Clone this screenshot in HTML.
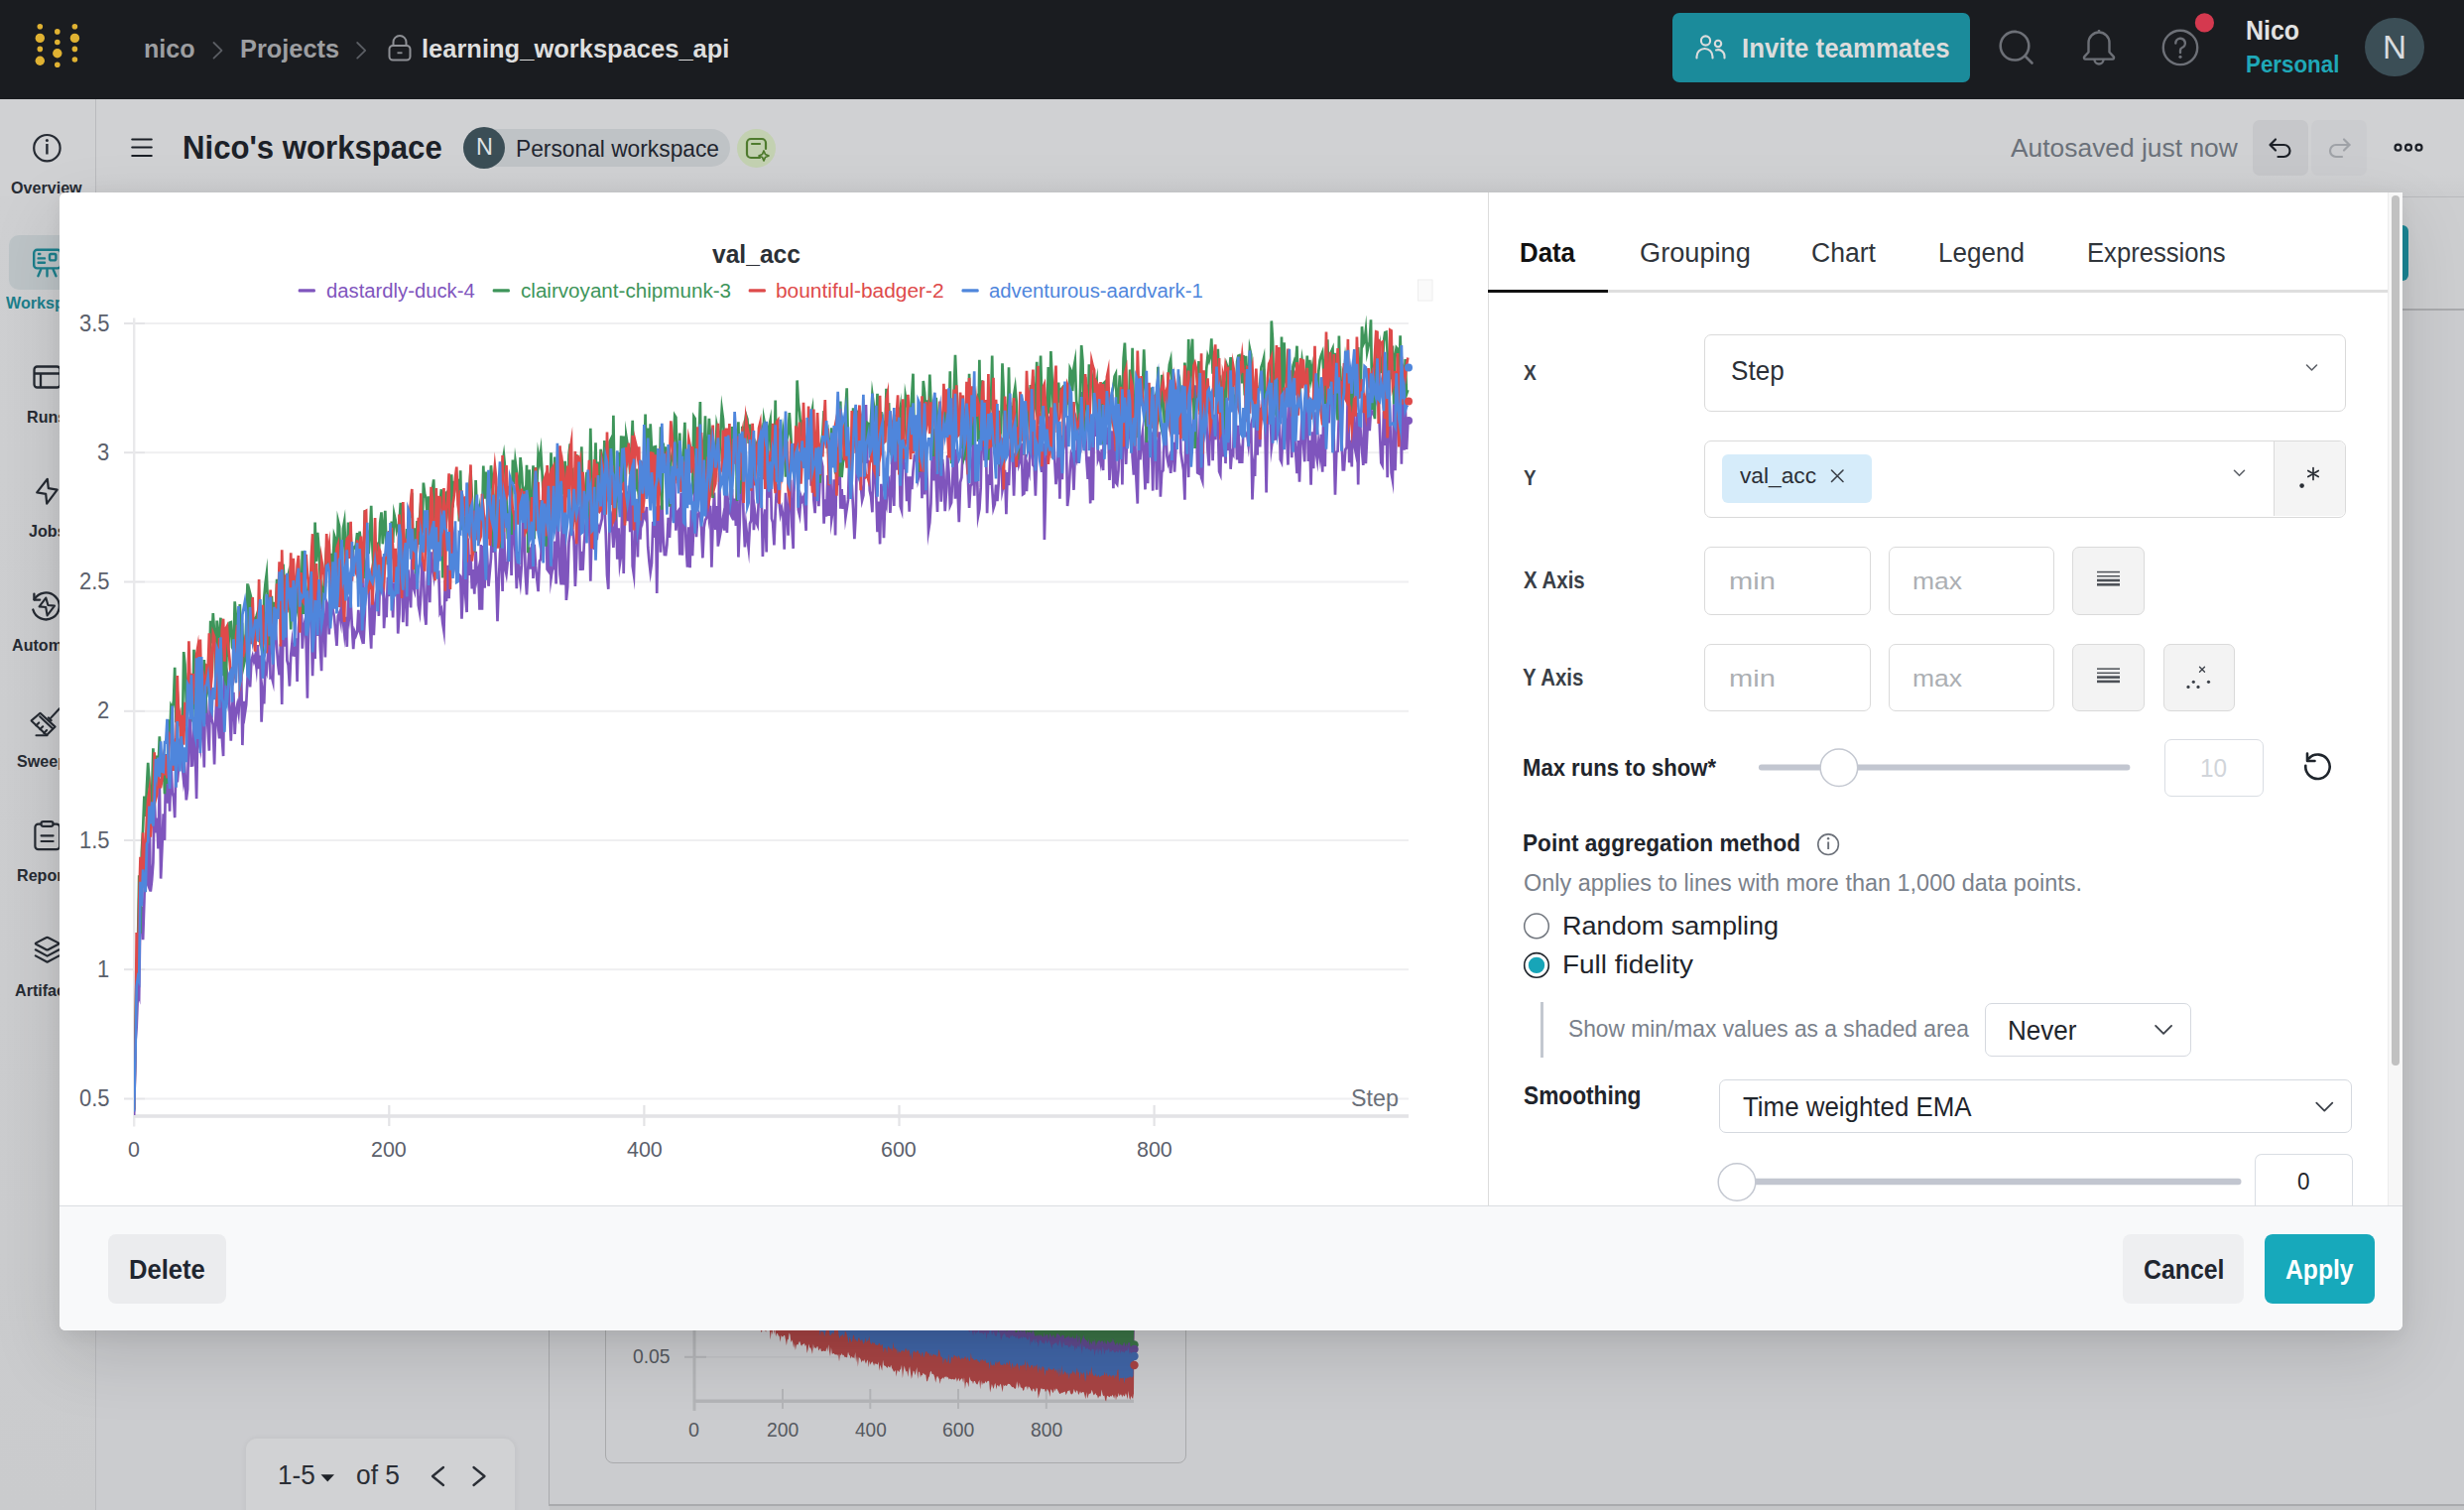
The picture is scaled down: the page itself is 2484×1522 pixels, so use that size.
<!DOCTYPE html>
<html><head><meta charset="utf-8"><title>W&amp;B workspace</title>
<style>
html,body{margin:0;padding:0;}
body{width:2484px;height:1522px;overflow:hidden;position:relative;background:#cecfd1;font-family:"Liberation Sans",sans-serif;}
.t{position:absolute;white-space:nowrap;transform-origin:0 0;font-family:"Liberation Sans",sans-serif;}
.r{position:absolute;}
.s{position:absolute;overflow:visible;}
</style></head><body>
<div class="r" style="left:0px;top:100px;width:2484px;height:1422px;background:#cbcccf;border-radius:0px;"></div>
<div class="r" style="left:0px;top:100px;width:2484px;height:98px;background:#d0d1d3;border-radius:0px;"></div>
<div class="r" style="left:96px;top:198px;width:2388px;height:114px;background:#cdced0;border-radius:0px;"></div>
<div class="r" style="left:0px;top:198px;width:96px;height:1324px;background:linear-gradient(#cfd0d2,#cacbcd);border-radius:0px;"></div>
<div class="r" style="left:96px;top:176px;width:2388px;height:22px;background:linear-gradient(#d0d1d3,#cbccce);border-radius:0px;"></div>
<div class="r" style="left:96px;top:100px;width:1px;height:1422px;background:#b9babd;border-radius:0px;"></div>
<div class="r" style="left:9px;top:237px;width:83px;height:55px;background:#bdc4c7;border-radius:10px;"></div>
<svg class="s" style="left:0px;top:100px;" width="100" height="1000" viewBox="0 100 100 1000"><circle cx="47.4" cy="149.2" r="13.2" fill="none" stroke="#262b33" stroke-width="2.2"/><rect x="46.2" y="145" width="2.4" height="10.5" fill="#262b33"/><circle cx="47.4" cy="141.5" r="1.5" fill="#262b33"/><g fill="none" stroke="#1c7f8c" stroke-width="2.4" stroke-linecap="round" stroke-linejoin="round"><rect x="34.2" y="251.8" width="27" height="18.6" rx="3.2"/><path d="M39 256h1.3M38.6 260.4h6.4M38.6 264.7h6.4"/><rect x="50" y="256" width="6.4" height="6.4" rx="1.6"/><path d="M41.2 271.6l-2.8 6.6M47.5 271.6v6.6M53.6 271.6l2.9 6.6"/></g><g fill="none" stroke="#262b33" stroke-width="2.3" stroke-linejoin="round"><rect x="34.5" y="369.5" width="26" height="21" rx="3"/><path d="M34.5 376.5h26M41 376.5v14"/></g><path d="M47.8 482.8 L37.2 496.4 L46.2 497.9 L47.2 507.6 L57.7 493.6 L48.8 492.2 Z" fill="none" stroke="#262b33" stroke-width="2.2" stroke-linejoin="round"/><g fill="none" stroke="#262b33" stroke-width="2.3" stroke-linecap="round" stroke-linejoin="round"><path d="M34.6 604.2 A13.5 13.5 0 1 1 33.3 614.5"/><path d="M34.4 598.6 V604.6 H40.2"/><path d="M46.3 602.6 L39.6 611.4 L46.2 612 L47.6 620.4 L55 610.6 L48.4 610 Z" stroke-width="2.1"/></g><g fill="none" stroke="#262b33" stroke-width="2.1" stroke-linecap="round" stroke-linejoin="round"><path d="M40.5 718.8 L31.6 726.4 L47 741 L55.6 732.6 Z"/><path d="M40.2 722.2 L53.2 734.6"/><path d="M51.2 723.6 L60 714.2"/><path d="M36.5 741.2 H47.5"/><path d="M36.4 731.2 L39.2 728.4M40.4 735.1 L43.2 732.3M44.3 738.9 L47.1 736.1"/><path d="M48.9 723.5 L51.5 726.1" stroke-width="2.4"/></g><g fill="none" stroke="#262b33" stroke-width="2.2" stroke-linejoin="round" stroke-linecap="round"><path d="M41.2 830.6 H38.6 a3.2 3.2 0 0 0 -3.2 3.2 V853 a3.2 3.2 0 0 0 3.2 3.2 H57 a3.2 3.2 0 0 0 3.2 -3.2 V833.8 a3.2 3.2 0 0 0 -3.2 -3.2 H53.8"/><rect x="41.4" y="828.2" width="12.2" height="4.6" rx="2.3"/><path d="M41.6 842.3h12M41.6 848h12"/></g><g fill="none" stroke="#262b33" stroke-width="2.2" stroke-linejoin="round" stroke-linecap="round"><path d="M46.3 945.2 Q47.6 944.4 48.9 945.2 L58.8 950.4 Q60 951.1 58.8 951.8 L48.9 957 Q47.6 957.8 46.3 957 L36.4 951.8 Q35.2 951.1 36.4 950.4 Z"/><path d="M35.8 957.3 L47.6 963.6 L59.6 957.3"/><path d="M35.8 963.4 L47.6 969.7 L59.6 963.4"/></g></svg>
<div class="t" style="left:11.06px;top:180.96px;font-size:16.28px;line-height:16.28px;color:#272c34;font-weight:bold;transform:scaleX(0.9904);">Overview</div>
<div class="t" style="left:5.60px;top:296.76px;font-size:16.28px;line-height:16.28px;color:#1c7f8c;font-weight:bold;transform:scaleX(0.9904);">Workspaces</div>
<div class="t" style="left:26.90px;top:411.96px;font-size:16.28px;line-height:16.28px;color:#272c34;font-weight:bold;transform:scaleX(0.9904);">Runs</div>
<div class="t" style="left:28.63px;top:526.76px;font-size:16.28px;line-height:16.28px;color:#272c34;font-weight:bold;transform:scaleX(0.9904);">Jobs</div>
<div class="t" style="left:12.10px;top:641.76px;font-size:16.28px;line-height:16.28px;color:#272c34;font-weight:bold;transform:scaleX(0.9904);">Automations</div>
<div class="t" style="left:17.30px;top:759.16px;font-size:16.28px;line-height:16.28px;color:#272c34;font-weight:bold;transform:scaleX(0.9904);">Sweeps</div>
<div class="t" style="left:16.62px;top:874.46px;font-size:16.28px;line-height:16.28px;color:#272c34;font-weight:bold;transform:scaleX(0.9904);">Reports</div>
<div class="t" style="left:14.68px;top:989.76px;font-size:16.28px;line-height:16.28px;color:#272c34;font-weight:bold;transform:scaleX(0.9904);">Artifacts</div>
<svg class="s" style="left:120px;top:120px;" width="50" height="50" viewBox="120 120 50 50"><g stroke="#1b2027" stroke-width="2.0" stroke-linecap="round"><path d="M133.2 140.5h19.6M133.2 148.6h19.6M133.2 157h19.6"/></g></svg>
<div class="t" style="left:184.38px;top:132.18px;font-size:33.43px;line-height:33.43px;color:#1c2128;font-weight:bold;transform:scaleX(0.9314);">Nico's workspace</div>
<div class="r" style="left:467px;top:130px;width:269px;height:38px;background:#bfc3c6;border-radius:19px;"></div>
<div class="r" style="left:467px;top:127.8px;width:42px;height:42px;border-radius:50%;background:#3b4e56"></div>
<div class="t" style="left:479.53px;top:137.16px;font-size:23.69px;line-height:23.69px;color:#dfe2e4;transform:scaleX(0.9874);">N</div>
<div class="t" style="left:519.58px;top:138.49px;font-size:24.13px;line-height:24.13px;color:#1f2630;transform:scaleX(0.9437);">Personal workspace</div>
<div class="r" style="left:743px;top:129.5px;width:39px;height:39px;border-radius:50%;background:#c3d1b1"></div>
<svg class="s" style="left:740px;top:125px;" width="50" height="50" viewBox="740 125 50 50"><g fill="none" stroke="#4f7b2e" stroke-width="2.2" stroke-linejoin="round" stroke-linecap="round"><path d="M766 159h-9a4 4 0 0 1 -4 -4v-11a4 4 0 0 1 4 -4h11a4 4 0 0 1 4 4v6"/><path d="M758 145h8"/><path d="M770 152 l1.5 3.5 3.5 1.5 -3.5 1.5 -1.5 3.5 -1.5 -3.5 -3.5 -1.5 3.5 -1.5z" stroke-width="1.8"/></g></svg>
<div class="t" style="left:2026.50px;top:136.09px;font-size:26.60px;line-height:26.60px;color:#6b717a;transform:scaleX(0.9920);">Autosaved just now</div>
<div class="r" style="left:2271px;top:121px;width:56px;height:56px;background:#c6c7ca;border-radius:7px;"></div>
<div class="r" style="left:2330px;top:121px;width:56px;height:56px;background:#cbcccf;border-radius:7px;"></div>
<svg class="s" style="left:2270px;top:120px;" width="200" height="60" viewBox="2270 120 200 60"><g fill="none" stroke="#1c2027" stroke-width="2.2" stroke-linecap="round" stroke-linejoin="round"><path d="M2294 140.5 l-5.5 5.5 5.5 5.5"/><path d="M2289 146h13.5a6 6 0 0 1 0 12h-6"/></g><g fill="none" stroke="#9fa2a7" stroke-width="2.2" stroke-linecap="round" stroke-linejoin="round"><path d="M2363 140.5 l5.5 5.5 -5.5 5.5"/><path d="M2368.5 146h-13.5a6 6 0 0 0 0 12h6"/></g><g fill="none" stroke="#1c2027" stroke-width="2.2"><circle cx="2417.5" cy="148.7" r="3"/><circle cx="2428" cy="148.7" r="3"/><circle cx="2438.5" cy="148.7" r="3"/></g></svg>
<div class="r" style="left:2422px;top:198px;width:62px;height:1px;background:#b9babd;border-radius:0px;"></div>
<div class="r" style="left:2422px;top:227px;width:6px;height:56px;background:#1b8796;border-radius:0px;border-radius:0 6px 6px 0;"></div>
<div class="r" style="left:2422px;top:311px;width:62px;height:2px;background:#a9aaad;border-radius:0px;"></div>
<div class="r" style="left:553px;top:1341px;width:1px;height:176px;background:#a9aaad;border-radius:0px;"></div>
<div class="r" style="left:553px;top:1516px;width:1931px;height:2px;background:#a9aaad;border-radius:0px;"></div>
<div class="r" style="left:554px;top:1518px;width:1930px;height:4px;background:#c4c5c7;border-radius:0px;"></div>
<div class="r" style="left:610px;top:1300px;width:586px;height:175px;background:transparent;border:1.5px solid #a9aaac;box-sizing:border-box;border-radius:8px;"></div>
<svg class="s" style="left:600px;top:1336px;" width="600" height="186" viewBox="600 1336 600 186"><rect x="698.5" y="1341" width="3" height="81" fill="#b4b5b8"/><rect x="700" y="1410.5" width="443" height="3.5" fill="#b4b5b8"/><rect x="690" y="1367.3" width="453" height="1.2" fill="#bfc0c3"/><rect x="690" y="1366.8" width="22" height="2" fill="#b4b5b8"/><rect x="788" y="1400" width="2" height="20" fill="#b4b5b8"/><rect x="876.3" y="1400" width="2" height="20" fill="#b4b5b8"/><rect x="965" y="1400" width="2" height="20" fill="#b4b5b8"/><rect x="1053.8" y="1400" width="2" height="20" fill="#b4b5b8"/><polygon points="765.0,1339.2 765.9,1340.6 766.8,1340.8 767.7,1343.3 768.6,1340.2 769.5,1337.9 770.4,1338.9 771.3,1340.9 772.2,1342.8 773.1,1334.8 774.0,1339.9 774.9,1340.2 775.8,1340.5 776.7,1350.5 777.6,1341.5 778.5,1345.3 779.4,1337.0 780.3,1345.0 781.2,1337.9 782.1,1347.2 783.0,1344.2 783.9,1343.9 784.8,1346.5 785.7,1346.8 786.6,1352.7 787.5,1346.0 788.4,1347.3 789.3,1347.6 790.2,1345.9 791.1,1346.1 792.0,1350.5 792.9,1356.2 793.8,1349.9 794.7,1350.3 795.6,1343.6 796.5,1345.3 797.4,1353.2 798.3,1350.6 799.2,1353.1 800.1,1358.8 801.0,1354.1 801.9,1361.0 802.8,1355.9 803.7,1355.1 804.6,1355.4 805.5,1352.6 806.4,1352.2 807.3,1355.4 808.2,1356.8 809.1,1355.0 810.0,1355.0 810.9,1353.7 811.8,1356.9 812.7,1355.2 813.6,1364.1 814.5,1360.5 815.4,1354.5 816.3,1358.8 817.2,1358.3 818.1,1361.0 819.0,1364.9 819.9,1354.4 820.8,1359.6 821.7,1357.8 822.6,1359.5 823.5,1357.5 824.4,1357.1 825.3,1361.5 826.2,1360.0 827.1,1358.8 828.0,1362.3 828.9,1361.9 829.8,1361.8 830.7,1361.6 831.6,1362.1 832.5,1362.1 833.4,1358.0 834.3,1362.6 835.2,1355.2 836.1,1362.5 837.0,1367.3 837.9,1357.9 838.8,1364.4 839.7,1364.6 840.6,1364.1 841.5,1365.3 842.4,1365.6 843.3,1365.1 844.2,1366.7 845.1,1364.8 846.0,1372.4 846.9,1365.0 847.8,1366.5 848.7,1364.0 849.6,1366.3 850.5,1365.7 851.4,1367.8 852.3,1367.7 853.2,1368.3 854.1,1367.9 855.0,1362.6 855.9,1365.4 856.8,1366.5 857.7,1369.4 858.6,1366.8 859.5,1368.4 860.4,1368.3 861.3,1369.6 862.2,1363.1 863.1,1373.3 864.0,1367.0 864.9,1377.7 865.8,1368.1 866.7,1368.7 867.6,1370.1 868.5,1373.5 869.4,1371.0 870.3,1372.4 871.2,1370.1 872.1,1372.5 873.0,1374.8 873.9,1371.9 874.8,1370.4 875.7,1378.3 876.6,1371.7 877.5,1375.7 878.4,1373.6 879.3,1372.2 880.2,1373.9 881.1,1376.8 882.0,1373.8 882.9,1375.2 883.8,1374.6 884.7,1375.7 885.6,1372.6 886.5,1381.8 887.4,1375.4 888.3,1378.4 889.2,1381.8 890.1,1370.7 891.0,1376.2 891.9,1376.6 892.8,1376.9 893.7,1378.1 894.6,1379.0 895.5,1376.8 896.4,1378.0 897.3,1378.4 898.2,1375.8 899.1,1379.1 900.0,1380.5 900.9,1382.4 901.8,1382.4 902.7,1380.7 903.6,1387.7 904.5,1381.2 905.4,1381.6 906.3,1383.2 907.2,1380.8 908.1,1379.9 909.0,1375.8 909.9,1389.3 910.8,1381.6 911.7,1376.6 912.6,1380.5 913.5,1382.7 914.4,1381.7 915.3,1388.0 916.2,1380.8 917.1,1377.3 918.0,1384.1 918.9,1389.9 919.8,1386.1 920.7,1381.5 921.6,1382.5 922.5,1386.3 923.4,1382.4 924.3,1377.9 925.2,1390.0 926.1,1383.0 927.0,1382.6 927.9,1388.4 928.8,1385.7 929.7,1386.6 930.6,1383.7 931.5,1384.7 932.4,1385.8 933.3,1385.4 934.2,1392.4 935.1,1392.0 936.0,1388.5 936.9,1387.2 937.8,1382.9 938.7,1381.7 939.6,1385.3 940.5,1384.7 941.4,1385.8 942.3,1388.4 943.2,1393.8 944.1,1389.1 945.0,1386.8 945.9,1388.2 946.8,1389.9 947.7,1395.1 948.6,1390.1 949.5,1389.8 950.4,1388.2 951.3,1390.0 952.2,1387.5 953.1,1388.6 954.0,1387.1 954.9,1388.8 955.8,1387.9 956.7,1390.5 957.6,1389.6 958.5,1390.1 959.4,1390.5 960.3,1389.7 961.2,1390.6 962.1,1390.2 963.0,1390.5 963.9,1388.2 964.8,1392.7 965.7,1390.5 966.6,1389.0 967.5,1392.5 968.4,1390.6 969.3,1389.6 970.2,1389.5 971.1,1394.1 972.0,1388.3 972.9,1400.1 973.8,1394.0 974.7,1392.8 975.6,1394.3 976.5,1398.2 977.4,1387.6 978.3,1390.7 979.2,1392.3 980.1,1392.1 981.0,1395.1 981.9,1391.9 982.8,1391.9 983.7,1394.1 984.6,1395.3 985.5,1395.5 986.4,1393.0 987.3,1391.0 988.2,1400.6 989.1,1391.4 990.0,1396.2 990.9,1393.2 991.8,1394.7 992.7,1394.1 993.6,1392.0 994.5,1394.0 995.4,1392.2 996.3,1391.7 997.2,1392.4 998.1,1403.5 999.0,1399.5 999.9,1395.1 1000.8,1397.9 1001.7,1400.1 1002.6,1395.8 1003.5,1394.0 1004.4,1400.4 1005.3,1396.0 1006.2,1396.4 1007.1,1397.9 1008.0,1395.7 1008.9,1394.7 1009.8,1399.0 1010.7,1403.2 1011.6,1395.5 1012.5,1397.2 1013.4,1396.0 1014.3,1397.1 1015.2,1396.4 1016.1,1394.7 1017.0,1395.0 1017.9,1395.1 1018.8,1396.3 1019.7,1397.6 1020.6,1398.2 1021.5,1398.0 1022.4,1399.3 1023.3,1400.1 1024.2,1398.9 1025.1,1392.3 1026.0,1396.3 1026.9,1399.8 1027.8,1393.6 1028.7,1398.0 1029.6,1398.8 1030.5,1399.1 1031.4,1402.0 1032.3,1401.1 1033.2,1397.6 1034.1,1398.4 1035.0,1396.8 1035.9,1400.9 1036.8,1397.4 1037.7,1397.9 1038.6,1399.4 1039.5,1401.2 1040.4,1402.7 1041.3,1399.8 1042.2,1399.8 1043.1,1402.4 1044.0,1402.6 1044.9,1398.4 1045.8,1400.1 1046.7,1409.4 1047.6,1405.9 1048.5,1402.7 1049.4,1399.5 1050.3,1399.6 1051.2,1400.4 1052.1,1399.9 1053.0,1400.0 1053.9,1403.0 1054.8,1402.0 1055.7,1399.7 1056.6,1401.5 1057.5,1403.1 1058.4,1408.1 1059.3,1400.2 1060.2,1400.9 1061.1,1403.7 1062.0,1403.5 1062.9,1399.6 1063.8,1402.5 1064.7,1399.5 1065.6,1399.9 1066.5,1401.7 1067.4,1403.4 1068.3,1404.9 1069.2,1404.7 1070.1,1403.5 1071.0,1404.2 1071.9,1403.2 1072.8,1402.9 1073.7,1402.4 1074.6,1406.2 1075.5,1404.3 1076.4,1402.1 1077.3,1402.1 1078.2,1401.1 1079.1,1404.2 1080.0,1405.4 1080.9,1405.2 1081.8,1404.1 1082.7,1400.0 1083.6,1402.4 1084.5,1404.0 1085.4,1401.3 1086.3,1402.3 1087.2,1406.0 1088.1,1404.6 1089.0,1402.2 1089.9,1404.5 1090.8,1403.6 1091.7,1402.9 1092.6,1403.2 1093.5,1406.5 1094.4,1410.2 1095.3,1403.2 1096.2,1409.8 1097.1,1406.7 1098.0,1404.4 1098.9,1405.1 1099.8,1404.0 1100.7,1400.8 1101.6,1403.5 1102.5,1406.2 1103.4,1405.7 1104.3,1403.9 1105.2,1406.0 1106.1,1406.4 1107.0,1409.7 1107.9,1407.6 1108.8,1407.2 1109.7,1407.6 1110.6,1400.6 1111.5,1405.4 1112.4,1407.3 1113.3,1406.4 1114.2,1411.2 1115.1,1412.5 1116.0,1407.3 1116.9,1406.8 1117.8,1408.1 1118.7,1408.2 1119.6,1406.8 1120.5,1407.8 1121.4,1405.8 1122.3,1407.2 1123.2,1409.7 1124.1,1405.5 1125.0,1411.5 1125.9,1407.1 1126.8,1408.5 1127.7,1404.1 1128.6,1407.4 1129.5,1405.5 1130.4,1405.7 1131.3,1408.5 1132.2,1405.4 1133.1,1407.5 1134.0,1406.9 1134.9,1404.2 1135.8,1406.7 1136.7,1410.5 1137.6,1402.1 1138.5,1409.2 1139.4,1411.1 1140.3,1407.1 1141.2,1409.1 1142.1,1410.1 1143.0,1404.5 1143.5,1330 765,1330" fill="#a84444"/><polygon points="815.0,1335.3 815.9,1338.5 816.8,1335.9 817.7,1334.5 818.6,1329.2 819.5,1337.1 820.4,1340.0 821.3,1338.7 822.2,1335.8 823.1,1339.7 824.0,1339.0 824.9,1339.5 825.8,1336.7 826.7,1346.2 827.6,1341.4 828.5,1341.9 829.4,1342.6 830.3,1342.3 831.2,1347.6 832.1,1343.2 833.0,1339.7 833.9,1340.2 834.8,1340.5 835.7,1340.0 836.6,1346.2 837.5,1345.8 838.4,1344.5 839.3,1342.7 840.2,1345.4 841.1,1341.6 842.0,1336.3 842.9,1341.5 843.8,1340.7 844.7,1338.4 845.6,1346.0 846.5,1349.6 847.4,1346.2 848.3,1346.4 849.2,1345.0 850.1,1345.8 851.0,1348.5 851.9,1341.9 852.8,1342.3 853.7,1345.1 854.6,1348.2 855.5,1354.4 856.4,1347.7 857.3,1349.4 858.2,1352.7 859.1,1351.9 860.0,1346.3 860.9,1345.4 861.8,1351.3 862.7,1349.6 863.6,1351.9 864.5,1352.4 865.4,1348.6 866.3,1348.4 867.2,1351.9 868.1,1350.4 869.0,1350.2 869.9,1353.1 870.8,1354.9 871.7,1352.3 872.6,1348.6 873.5,1353.3 874.4,1351.0 875.3,1351.8 876.2,1347.0 877.1,1352.3 878.0,1354.4 878.9,1354.7 879.8,1352.2 880.7,1354.2 881.6,1353.2 882.5,1355.5 883.4,1355.6 884.3,1356.0 885.2,1355.8 886.1,1353.8 887.0,1354.4 887.9,1357.1 888.8,1355.4 889.7,1355.1 890.6,1363.5 891.5,1358.2 892.4,1358.6 893.3,1359.2 894.2,1364.2 895.1,1356.7 896.0,1357.7 896.9,1359.1 897.8,1359.5 898.7,1359.5 899.6,1361.8 900.5,1352.5 901.4,1359.5 902.3,1358.2 903.2,1361.0 904.1,1358.9 905.0,1365.1 905.9,1360.5 906.8,1362.9 907.7,1363.4 908.6,1361.3 909.5,1361.5 910.4,1361.0 911.3,1363.1 912.2,1360.7 913.1,1358.8 914.0,1360.6 914.9,1362.6 915.8,1360.1 916.7,1361.4 917.6,1368.0 918.5,1362.8 919.4,1371.3 920.3,1363.3 921.2,1361.6 922.1,1362.0 923.0,1363.6 923.9,1362.7 924.8,1361.0 925.7,1361.7 926.6,1364.9 927.5,1363.6 928.4,1367.4 929.3,1363.6 930.2,1362.9 931.1,1368.6 932.0,1366.4 932.9,1362.3 933.8,1362.5 934.7,1362.4 935.6,1364.8 936.5,1363.6 937.4,1367.2 938.3,1363.5 939.2,1367.2 940.1,1365.9 941.0,1364.5 941.9,1365.6 942.8,1366.0 943.7,1365.5 944.6,1367.9 945.5,1365.9 946.4,1360.1 947.3,1362.4 948.2,1366.8 949.1,1368.2 950.0,1367.6 950.9,1375.6 951.8,1368.2 952.7,1370.9 953.6,1368.8 954.5,1373.4 955.4,1372.4 956.3,1364.5 957.2,1373.9 958.1,1374.4 959.0,1368.1 959.9,1367.7 960.8,1370.0 961.7,1365.4 962.6,1366.3 963.5,1367.8 964.4,1366.5 965.3,1369.8 966.2,1366.1 967.1,1367.8 968.0,1369.6 968.9,1370.6 969.8,1368.3 970.7,1369.2 971.6,1369.9 972.5,1367.7 973.4,1367.0 974.3,1371.0 975.2,1367.5 976.1,1369.8 977.0,1371.8 977.9,1371.9 978.8,1363.6 979.7,1369.8 980.6,1369.1 981.5,1370.5 982.4,1371.1 983.3,1370.8 984.2,1370.0 985.1,1370.4 986.0,1372.5 986.9,1372.2 987.8,1373.8 988.7,1369.8 989.6,1371.8 990.5,1369.8 991.4,1371.6 992.3,1371.9 993.2,1369.7 994.1,1373.6 995.0,1374.0 995.9,1373.5 996.8,1373.2 997.7,1380.7 998.6,1371.3 999.5,1376.0 1000.4,1376.4 1001.3,1375.1 1002.2,1377.1 1003.1,1374.5 1004.0,1371.8 1004.9,1375.6 1005.8,1372.3 1006.7,1373.6 1007.6,1371.5 1008.5,1375.4 1009.4,1375.9 1010.3,1375.5 1011.2,1376.4 1012.1,1374.0 1013.0,1375.4 1013.9,1375.7 1014.8,1373.2 1015.7,1373.6 1016.6,1376.3 1017.5,1370.8 1018.4,1374.5 1019.3,1380.8 1020.2,1373.6 1021.1,1375.5 1022.0,1379.5 1022.9,1375.8 1023.8,1378.1 1024.7,1375.1 1025.6,1374.0 1026.5,1376.2 1027.4,1381.7 1028.3,1376.3 1029.2,1376.3 1030.1,1377.2 1031.0,1375.1 1031.9,1376.5 1032.8,1375.6 1033.7,1370.5 1034.6,1382.0 1035.5,1371.9 1036.4,1375.3 1037.3,1377.0 1038.2,1379.4 1039.1,1376.7 1040.0,1375.9 1040.9,1375.8 1041.8,1380.1 1042.7,1375.8 1043.6,1378.1 1044.5,1376.6 1045.4,1374.9 1046.3,1384.6 1047.2,1376.3 1048.1,1381.5 1049.0,1377.8 1049.9,1382.1 1050.8,1377.0 1051.7,1377.7 1052.6,1379.1 1053.5,1387.2 1054.4,1380.5 1055.3,1381.5 1056.2,1381.8 1057.1,1377.7 1058.0,1380.0 1058.9,1380.1 1059.8,1380.5 1060.7,1381.1 1061.6,1379.9 1062.5,1378.7 1063.4,1382.5 1064.3,1380.0 1065.2,1381.3 1066.1,1384.9 1067.0,1378.7 1067.9,1387.9 1068.8,1379.1 1069.7,1387.0 1070.6,1376.2 1071.5,1385.7 1072.4,1384.7 1073.3,1381.8 1074.2,1383.6 1075.1,1383.7 1076.0,1386.4 1076.9,1382.9 1077.8,1390.3 1078.7,1383.9 1079.6,1384.8 1080.5,1384.4 1081.4,1380.9 1082.3,1384.0 1083.2,1381.9 1084.1,1386.8 1085.0,1382.7 1085.9,1378.4 1086.8,1384.0 1087.7,1382.5 1088.6,1391.0 1089.5,1382.5 1090.4,1384.3 1091.3,1386.0 1092.2,1383.1 1093.1,1384.7 1094.0,1392.7 1094.9,1388.9 1095.8,1380.3 1096.7,1386.6 1097.6,1386.2 1098.5,1381.2 1099.4,1386.0 1100.3,1377.2 1101.2,1383.8 1102.1,1386.2 1103.0,1386.5 1103.9,1387.0 1104.8,1384.2 1105.7,1388.0 1106.6,1387.2 1107.5,1385.6 1108.4,1388.5 1109.3,1387.6 1110.2,1387.1 1111.1,1386.3 1112.0,1386.5 1112.9,1385.9 1113.8,1382.6 1114.7,1387.1 1115.6,1383.5 1116.5,1386.5 1117.4,1387.8 1118.3,1385.8 1119.2,1385.9 1120.1,1388.6 1121.0,1385.9 1121.9,1387.1 1122.8,1385.7 1123.7,1389.9 1124.6,1385.6 1125.5,1387.8 1126.4,1381.6 1127.3,1380.1 1128.2,1392.9 1129.1,1388.8 1130.0,1389.6 1130.9,1388.8 1131.8,1389.6 1132.7,1388.2 1133.6,1394.8 1134.5,1388.0 1135.4,1389.9 1136.3,1388.6 1137.2,1389.2 1138.1,1387.4 1139.0,1389.1 1139.9,1386.8 1140.8,1389.1 1141.7,1388.0 1142.6,1386.5 1143.5,1330 815,1330" fill="#4065a7"/><polygon points="955.0,1336.0 955.9,1339.0 956.8,1340.1 957.7,1335.3 958.6,1338.5 959.5,1335.3 960.4,1336.2 961.3,1337.7 962.2,1335.2 963.1,1336.5 964.0,1339.5 964.9,1338.7 965.8,1341.0 966.7,1336.5 967.6,1339.8 968.5,1340.0 969.4,1339.8 970.3,1340.2 971.2,1340.6 972.1,1340.7 973.0,1336.1 973.9,1337.7 974.8,1338.7 975.7,1340.3 976.6,1341.7 977.5,1342.7 978.4,1341.0 979.3,1339.9 980.2,1343.2 981.1,1346.5 982.0,1341.4 982.9,1343.1 983.8,1344.9 984.7,1342.6 985.6,1343.3 986.5,1339.7 987.4,1344.1 988.3,1343.5 989.2,1343.7 990.1,1343.3 991.0,1344.4 991.9,1345.1 992.8,1342.8 993.7,1343.3 994.6,1349.9 995.5,1343.3 996.4,1344.8 997.3,1342.5 998.2,1338.8 999.1,1339.9 1000.0,1346.0 1000.9,1343.3 1001.8,1342.1 1002.7,1345.3 1003.6,1346.8 1004.5,1346.9 1005.4,1343.6 1006.3,1341.2 1007.2,1343.2 1008.1,1344.1 1009.0,1350.9 1009.9,1348.7 1010.8,1345.9 1011.7,1345.0 1012.6,1343.7 1013.5,1345.8 1014.4,1348.1 1015.3,1347.5 1016.2,1348.1 1017.1,1348.9 1018.0,1348.9 1018.9,1345.3 1019.8,1347.4 1020.7,1345.2 1021.6,1347.6 1022.5,1346.7 1023.4,1347.6 1024.3,1349.3 1025.2,1345.5 1026.1,1349.8 1027.0,1348.9 1027.9,1349.3 1028.8,1348.7 1029.7,1347.0 1030.6,1349.7 1031.5,1346.6 1032.4,1348.4 1033.3,1347.4 1034.2,1348.0 1035.1,1349.5 1036.0,1350.4 1036.9,1350.3 1037.8,1345.8 1038.7,1356.4 1039.6,1351.2 1040.5,1353.5 1041.4,1351.1 1042.3,1349.4 1043.2,1354.6 1044.1,1348.4 1045.0,1353.2 1045.9,1352.8 1046.8,1358.1 1047.7,1351.5 1048.6,1350.8 1049.5,1351.0 1050.4,1353.7 1051.3,1353.3 1052.2,1354.3 1053.1,1354.5 1054.0,1350.3 1054.9,1352.0 1055.8,1354.5 1056.7,1352.4 1057.6,1350.7 1058.5,1353.8 1059.4,1355.7 1060.3,1359.8 1061.2,1355.2 1062.1,1355.2 1063.0,1354.0 1063.9,1353.9 1064.8,1353.1 1065.7,1354.8 1066.6,1356.9 1067.5,1354.4 1068.4,1350.3 1069.3,1353.4 1070.2,1357.4 1071.1,1358.6 1072.0,1351.7 1072.9,1354.7 1073.8,1356.3 1074.7,1355.9 1075.6,1356.0 1076.5,1355.9 1077.4,1358.5 1078.3,1357.0 1079.2,1357.7 1080.1,1354.3 1081.0,1357.1 1081.9,1356.2 1082.8,1357.1 1083.7,1362.1 1084.6,1357.2 1085.5,1359.7 1086.4,1356.4 1087.3,1356.4 1088.2,1358.8 1089.1,1352.9 1090.0,1359.4 1090.9,1364.4 1091.8,1355.0 1092.7,1357.9 1093.6,1357.0 1094.5,1359.9 1095.4,1359.6 1096.3,1358.2 1097.2,1360.3 1098.1,1360.2 1099.0,1360.4 1099.9,1362.4 1100.8,1359.7 1101.7,1359.5 1102.6,1360.6 1103.5,1367.0 1104.4,1361.6 1105.3,1360.9 1106.2,1358.6 1107.1,1365.8 1108.0,1358.9 1108.9,1362.1 1109.8,1360.3 1110.7,1366.3 1111.6,1357.1 1112.5,1360.0 1113.4,1365.4 1114.3,1361.8 1115.2,1360.0 1116.1,1361.2 1117.0,1360.6 1117.9,1358.4 1118.8,1363.8 1119.7,1361.8 1120.6,1362.5 1121.5,1360.8 1122.4,1361.5 1123.3,1363.3 1124.2,1363.2 1125.1,1362.3 1126.0,1361.5 1126.9,1363.7 1127.8,1362.2 1128.7,1360.3 1129.6,1364.5 1130.5,1361.3 1131.4,1363.1 1132.3,1362.1 1133.2,1363.8 1134.1,1362.3 1135.0,1361.3 1135.9,1361.2 1136.8,1361.6 1137.7,1357.8 1138.6,1364.8 1139.5,1362.3 1140.4,1366.1 1141.3,1358.4 1142.2,1364.8 1143.1,1359.6 1143.5,1330 955,1330" fill="#604a8e"/><polygon points="995.0,1337.5 995.9,1333.5 996.8,1337.7 997.7,1338.6 998.6,1335.3 999.5,1339.9 1000.4,1334.8 1001.3,1341.3 1002.2,1337.1 1003.1,1338.3 1004.0,1338.7 1004.9,1338.8 1005.8,1336.6 1006.7,1343.9 1007.6,1336.4 1008.5,1339.5 1009.4,1340.1 1010.3,1337.3 1011.2,1340.4 1012.1,1338.3 1013.0,1341.8 1013.9,1338.3 1014.8,1342.3 1015.7,1341.2 1016.6,1339.6 1017.5,1341.2 1018.4,1336.8 1019.3,1339.2 1020.2,1340.3 1021.1,1339.0 1022.0,1339.7 1022.9,1339.1 1023.8,1343.6 1024.7,1343.0 1025.6,1342.4 1026.5,1339.0 1027.4,1343.2 1028.3,1340.2 1029.2,1342.1 1030.1,1340.6 1031.0,1342.9 1031.9,1340.2 1032.8,1341.3 1033.7,1341.5 1034.6,1345.0 1035.5,1341.5 1036.4,1342.9 1037.3,1343.0 1038.2,1342.1 1039.1,1342.8 1040.0,1344.6 1040.9,1341.3 1041.8,1341.3 1042.7,1344.4 1043.6,1346.9 1044.5,1346.5 1045.4,1345.3 1046.3,1347.0 1047.2,1344.4 1048.1,1346.9 1049.0,1345.3 1049.9,1345.8 1050.8,1347.3 1051.7,1347.7 1052.6,1343.0 1053.5,1347.5 1054.4,1345.8 1055.3,1345.0 1056.2,1345.0 1057.1,1350.3 1058.0,1345.0 1058.9,1344.2 1059.8,1346.9 1060.7,1347.4 1061.6,1345.2 1062.5,1345.9 1063.4,1348.7 1064.3,1348.2 1065.2,1344.7 1066.1,1343.5 1067.0,1345.7 1067.9,1344.9 1068.8,1346.9 1069.7,1347.9 1070.6,1345.4 1071.5,1345.9 1072.4,1345.5 1073.3,1349.6 1074.2,1348.4 1075.1,1348.3 1076.0,1346.5 1076.9,1348.2 1077.8,1345.7 1078.7,1349.2 1079.6,1347.2 1080.5,1348.9 1081.4,1345.9 1082.3,1349.5 1083.2,1348.3 1084.1,1349.4 1085.0,1347.9 1085.9,1343.8 1086.8,1353.5 1087.7,1346.6 1088.6,1348.3 1089.5,1355.5 1090.4,1350.7 1091.3,1349.3 1092.2,1345.4 1093.1,1348.7 1094.0,1349.8 1094.9,1350.9 1095.8,1351.3 1096.7,1353.3 1097.6,1349.0 1098.5,1356.8 1099.4,1351.7 1100.3,1355.2 1101.2,1352.6 1102.1,1350.9 1103.0,1353.5 1103.9,1349.3 1104.8,1357.3 1105.7,1353.8 1106.6,1352.4 1107.5,1351.5 1108.4,1350.6 1109.3,1353.5 1110.2,1351.8 1111.1,1351.8 1112.0,1351.5 1112.9,1354.8 1113.8,1350.8 1114.7,1354.3 1115.6,1354.7 1116.5,1350.7 1117.4,1352.4 1118.3,1353.3 1119.2,1353.9 1120.1,1352.1 1121.0,1352.9 1121.9,1348.7 1122.8,1352.2 1123.7,1353.7 1124.6,1356.3 1125.5,1354.2 1126.4,1353.0 1127.3,1356.5 1128.2,1353.1 1129.1,1354.9 1130.0,1355.3 1130.9,1356.0 1131.8,1356.3 1132.7,1353.7 1133.6,1353.0 1134.5,1357.4 1135.4,1353.8 1136.3,1356.9 1137.2,1353.4 1138.1,1353.5 1139.0,1353.1 1139.9,1356.5 1140.8,1354.7 1141.7,1358.1 1142.6,1354.8 1143.5,1330 995,1330" fill="#3b7547"/><circle cx="1143.5" cy="1355.5" r="4.2" fill="#3b7547"/><circle cx="1143.5" cy="1360" r="4.2" fill="#604a8e"/><circle cx="1143.5" cy="1367" r="4.2" fill="#4065a7"/><circle cx="1143.5" cy="1376" r="4.2" fill="#a84444"/></svg>
<div class="t" style="left:638.23px;top:1358.44px;font-size:19.48px;line-height:19.48px;color:#55595f;transform:scaleX(0.9911);">0.05</div>
<div class="t" style="left:694.46px;top:1432.14px;font-size:19.48px;line-height:19.48px;color:#55595f;transform:scaleX(1.0162);">0</div>
<div class="t" style="left:772.73px;top:1432.14px;font-size:19.48px;line-height:19.48px;color:#55595f;transform:scaleX(0.9944);">200</div>
<div class="t" style="left:861.62px;top:1432.14px;font-size:19.48px;line-height:19.48px;color:#55595f;transform:scaleX(0.9758);">400</div>
<div class="t" style="left:949.73px;top:1432.14px;font-size:19.48px;line-height:19.48px;color:#55595f;transform:scaleX(0.9944);">600</div>
<div class="t" style="left:1038.63px;top:1432.14px;font-size:19.48px;line-height:19.48px;color:#55595f;transform:scaleX(0.9912);">800</div>
<div class="r" style="left:248px;top:1450px;width:271px;height:90px;background:#d1d2d4;border-radius:11px;box-shadow:0 0 6px rgba(0,0,0,0.06);"></div>
<div class="t" style="left:279.84px;top:1472.77px;font-size:27.33px;line-height:27.33px;color:#2a2e35;transform:scaleX(0.9575);">1-5</div>
<svg class="s" style="left:300px;top:1470px;" width="220" height="40" viewBox="300 1470 220 40"><path d="M323.5 1486.3h13.5l-6.75 7.2z" fill="#1e2228"/><g fill="none" stroke="#2a2e35" stroke-width="2.3" stroke-linecap="round" stroke-linejoin="round"><path d="M447 1479 l-11 9 11 9"/><path d="M477.5 1479 l11 9 -11 9"/></g></svg>
<div class="t" style="left:359.25px;top:1472.77px;font-size:27.33px;line-height:27.33px;color:#2a2e35;transform:scaleX(0.9651);">of 5</div>
<div class="r" style="left:0px;top:0px;width:2484px;height:100px;background:#1a1c20;border-radius:0px;"></div>
<svg class="s" style="left:0px;top:0px;" width="800" height="100" viewBox="0 0 800 100"><circle cx="40.3" cy="26.7" r="2.8" fill="#e0b232"/><circle cx="40.3" cy="38.4" r="4.7" fill="#e0b232"/><circle cx="40.3" cy="49.4" r="2.8" fill="#e0b232"/><circle cx="40.3" cy="61.3" r="4.7" fill="#e0b232"/><circle cx="57.8" cy="31.9" r="2.8" fill="#e0b232"/><circle cx="57.8" cy="42.5" r="2.8" fill="#e0b232"/><circle cx="57.8" cy="53.8" r="4.7" fill="#e0b232"/><circle cx="57.8" cy="65.2" r="2.8" fill="#e0b232"/><circle cx="75.4" cy="26.7" r="2.8" fill="#e0b232"/><circle cx="75.4" cy="38.4" r="4.7" fill="#e0b232"/><circle cx="75.4" cy="49.4" r="2.8" fill="#e0b232"/><circle cx="75.4" cy="60.0" r="2.8" fill="#e0b232"/><g fill="none" stroke="#5b5e64" stroke-width="1.8" stroke-linecap="round" stroke-linejoin="round"><path d="M215.5 43 l8 7.8 -8 7.8"/><path d="M360.2 43 l8 7.8 -8 7.8"/></g><g fill="none" stroke="#8e9095" stroke-width="2"><rect x="392.5" y="46" width="21" height="14.5" rx="3.5"/><path d="M396.5 46v-3.5a6.5 6.5 0 0 1 13 0v3.5"/></g><rect x="400.5" y="52.4" width="5" height="1.8" fill="#8e9095"/></svg>
<div class="t" style="left:144.67px;top:35.51px;font-size:26.45px;line-height:26.45px;color:#9d9ea1;font-weight:bold;transform:scaleX(0.9499);">nico</div>
<div class="t" style="left:241.55px;top:35.51px;font-size:26.45px;line-height:26.45px;color:#9d9ea1;font-weight:bold;transform:scaleX(0.9588);">Projects</div>
<div class="t" style="left:425.01px;top:35.51px;font-size:26.45px;line-height:26.45px;color:#dedede;font-weight:bold;transform:scaleX(0.9646);">learning_workspaces_api</div>
<div class="r" style="left:1686px;top:13px;width:300px;height:70px;background:#1b8b9b;border-radius:7px;"></div>
<svg class="s" style="left:1700px;top:25px;" width="50" height="50" viewBox="1700 25 50 50"><g fill="none" stroke="#dcdcdc" stroke-width="2.1" stroke-linecap="round"><circle cx="1719.5" cy="41" r="4.6"/><path d="M1710.5 58.5v-1.5a8 8 0 0 1 16 0v1.5"/><circle cx="1732" cy="44" r="3.2"/><path d="M1730 50.5a6.5 6.5 0 0 1 8.5 6.2v1.8"/></g></svg>
<div class="t" style="left:1755.92px;top:34.57px;font-size:27.33px;line-height:27.33px;color:#dcdcdc;font-weight:bold;transform:scaleX(0.9448);">Invite teammates</div>
<svg class="s" style="left:2000px;top:0px;" width="260" height="100" viewBox="2000 0 260 100"><g fill="none" stroke="#6d7077" stroke-width="2.6" stroke-linecap="round"><circle cx="2031" cy="46.2" r="14.3"/><path d="M2041.5 56.5 l7 7"/></g><g fill="none" stroke="#6d7077" stroke-width="2.4" stroke-linejoin="round"><path d="M2116 32.5a10.5 10.5 0 0 0 -10.5 10.5v9.5l-4.2 4.6a1.5 1.5 0 0 0 1.1 2.5h27.2a1.5 1.5 0 0 0 1.1 -2.5l-4.2 -4.6v-9.5a10.5 10.5 0 0 0 -10.5 -10.5z"/><path d="M2111.5 60a4.5 4.5 0 0 0 9 0"/><path d="M2116 30v2.5"/></g><g fill="none" stroke="#6d7077" stroke-width="2.4" stroke-linecap="round"><circle cx="2198" cy="47.9" r="17.2"/><path d="M2193.3 43.5a4.8 4.8 0 1 1 6.5 4.5c-1.2 .5 -1.8 1.5 -1.8 2.8v2.2"/></g><circle cx="2198" cy="57.3" r="1.6" fill="#6d7077"/><circle cx="2222.4" cy="22.9" r="9.6" fill="#d5394f"/></svg>
<div class="t" style="left:2264.28px;top:16.80px;font-size:27.18px;line-height:27.18px;color:#e2e2e2;font-weight:bold;transform:scaleX(0.9180);">Nico</div>
<div class="t" style="left:2264.45px;top:53.00px;font-size:24.71px;line-height:24.71px;color:#1fa8b8;font-weight:bold;transform:scaleX(0.9044);">Personal</div>
<div class="r" style="left:2384.2px;top:17.8px;width:59.6px;height:59.6px;border-radius:50%;background:#3b4e56"></div>
<div class="t" style="left:2402.04px;top:31.35px;font-size:32.99px;line-height:32.99px;color:#d9dcde;transform:scaleX(1.0067);">N</div>
<div class="r" style="left:60px;top:194px;width:2362px;height:1147px;background:#fff;border-radius:6px 0 6px 6px;box-shadow:0 26px 70px rgba(0,0,0,0.13),0 6px 18px rgba(0,0,0,0.06);"></div>
<div class="r" style="left:60px;top:1215px;width:2362px;height:126px;background:#f8f9fa;border-top:1.5px solid #dadde1;box-sizing:border-box;border-radius:0 0 6px 6px;"></div>
<div class="r" style="left:109px;top:1244px;width:119px;height:70px;background:#ebecee;border-radius:8px;"></div>
<div class="t" style="left:130.14px;top:1265.53px;font-size:27.62px;line-height:27.62px;color:#1f2630;font-weight:bold;transform:scaleX(0.9265);">Delete</div>
<div class="r" style="left:2140px;top:1244px;width:122px;height:70px;background:#eeeff1;border-radius:8px;"></div>
<div class="t" style="left:2160.81px;top:1265.53px;font-size:27.62px;line-height:27.62px;color:#1f2630;font-weight:bold;transform:scaleX(0.8990);">Cancel</div>
<div class="r" style="left:2283px;top:1244px;width:111px;height:70px;background:#17a9bb;border-radius:8px;"></div>
<div class="t" style="left:2303.58px;top:1265.53px;font-size:27.62px;line-height:27.62px;color:#ffffff;font-weight:bold;transform:scaleX(0.8944);">Apply</div>
<svg class="s" style="left:60px;top:194px;" width="1440" height="1021" viewBox="60 194 1440 1021"><rect x="146" y="325.0" width="1274" height="2" fill="#efeff1"/><rect x="125" y="325.0" width="21" height="2" fill="#e4e4e7"/><rect x="146" y="455.2" width="1274" height="2" fill="#efeff1"/><rect x="125" y="455.2" width="21" height="2" fill="#e4e4e7"/><rect x="146" y="585.5" width="1274" height="2" fill="#efeff1"/><rect x="125" y="585.5" width="21" height="2" fill="#e4e4e7"/><rect x="146" y="715.8" width="1274" height="2" fill="#efeff1"/><rect x="125" y="715.8" width="21" height="2" fill="#e4e4e7"/><rect x="146" y="846.0" width="1274" height="2" fill="#efeff1"/><rect x="125" y="846.0" width="21" height="2" fill="#e4e4e7"/><rect x="146" y="976.2" width="1274" height="2" fill="#efeff1"/><rect x="125" y="976.2" width="21" height="2" fill="#e4e4e7"/><rect x="146" y="1106.5" width="1274" height="2" fill="#efeff1"/><rect x="125" y="1106.5" width="21" height="2" fill="#e4e4e7"/><rect x="134" y="320.5" width="2.4" height="815" fill="#e9e9eb"/><rect x="135" y="1123.2" width="1285" height="3.6" fill="#e3e3e6"/><rect x="391.2" y="1114" width="2.2" height="21" fill="#e3e3e6"/><rect x="648.3" y="1114" width="2.2" height="21" fill="#e3e3e6"/><rect x="905.4" y="1114" width="2.2" height="21" fill="#e3e3e6"/><rect x="1162.5" y="1114" width="2.2" height="21" fill="#e3e3e6"/><defs><clipPath id="pc"><rect x="135" y="318" width="1290" height="806"/></clipPath></defs><g clip-path="url(#pc)"><polyline points="135.1,1124.2 136.4,1051.2 137.7,1034.7 139.0,999.7 140.2,1003.8 141.5,914.3 142.8,914.8 144.1,947.1 145.4,908.1 146.7,859.2 148.0,888.4 149.2,891.6 150.5,813.9 151.8,898.7 153.1,887.3 154.4,869.5 155.7,804.2 157.0,839.4 158.2,824.5 159.5,855.5 160.8,784.7 162.1,885.6 163.4,854.9 164.7,820.4 166.0,846.9 167.2,760.1 168.5,809.6 169.8,773.0 171.1,817.6 172.4,768.0 173.7,798.9 175.0,803.5 176.2,824.2 177.5,764.4 178.8,788.3 180.1,773.3 181.4,745.9 182.7,743.1 183.9,773.4 185.2,787.4 186.5,778.4 187.8,806.4 189.1,795.5 190.4,734.1 191.7,722.7 192.9,771.6 194.2,771.3 195.5,723.0 196.8,754.0 198.1,805.0 199.4,728.0 200.7,747.7 201.9,753.9 203.2,722.7 204.5,727.6 205.8,773.5 207.1,695.1 208.4,715.7 209.7,736.9 210.9,756.7 212.2,675.7 213.5,724.9 214.8,730.6 216.1,770.5 217.4,724.3 218.7,694.3 219.9,731.4 221.2,744.4 222.5,692.7 223.8,743.5 225.1,762.1 226.4,673.0 227.7,708.9 228.9,677.2 230.2,682.7 231.5,716.1 232.8,746.6 234.1,712.0 235.4,697.9 236.7,739.9 237.9,716.8 239.2,710.7 240.5,718.8 241.8,699.6 243.1,672.6 244.4,751.1 245.7,706.7 246.9,719.0 248.2,710.0 249.5,684.4 250.8,660.9 252.1,692.4 253.4,666.3 254.7,661.3 255.9,666.2 257.2,661.0 258.5,672.5 259.8,650.1 261.1,674.2 262.4,660.4 263.6,727.7 264.9,698.9 266.2,709.4 267.5,670.8 268.8,676.1 270.1,659.6 271.4,626.1 272.6,682.9 273.9,682.2 275.2,687.3 276.5,631.2 277.8,632.2 279.1,654.1 280.4,670.6 281.6,680.4 282.9,649.2 284.2,710.0 285.5,628.0 286.8,651.7 288.1,615.0 289.4,665.9 290.6,670.3 291.9,691.7 293.2,660.4 294.5,647.5 295.8,660.4 297.1,660.6 298.4,643.4 299.6,686.9 300.9,633.2 302.2,616.1 303.5,592.6 304.8,653.7 306.1,632.1 307.4,626.1 308.6,644.4 309.9,703.8 311.2,615.6 312.5,590.8 313.8,630.0 315.1,681.3 316.4,635.0 317.6,664.0 318.9,588.6 320.2,640.9 321.5,601.9 322.8,651.6 324.1,676.3 325.4,599.2 326.6,628.1 327.9,662.5 329.2,606.8 330.5,610.1 331.8,639.5 333.1,605.8 334.4,577.5 335.6,615.0 336.9,621.5 338.2,635.6 339.5,650.9 340.8,620.8 342.1,617.8 343.4,625.5 344.6,588.9 345.9,626.5 347.2,638.6 348.5,621.9 349.8,651.9 351.1,601.4 352.3,619.0 353.6,606.0 354.9,631.7 356.2,654.1 357.5,636.9 358.8,640.6 360.1,637.0 361.3,614.9 362.6,635.5 363.9,640.5 365.2,562.9 366.5,649.0 367.8,620.8 369.1,572.2 370.3,577.4 371.6,587.1 372.9,630.2 374.2,653.7 375.5,596.5 376.8,640.2 378.1,612.3 379.3,599.9 380.6,593.0 381.9,620.9 383.2,579.0 384.5,580.8 385.8,561.3 387.1,633.2 388.3,611.0 389.6,622.3 390.9,581.9 392.2,601.2 393.5,574.1 394.8,591.3 396.1,622.5 397.3,587.2 398.6,600.4 399.9,566.7 401.2,638.6 402.5,618.7 403.8,573.9 405.1,566.3 406.3,627.3 407.6,598.3 408.9,586.7 410.2,631.2 411.5,574.3 412.8,595.7 414.1,612.4 415.3,560.2 416.6,591.8 417.9,595.9 419.2,572.7 420.5,576.3 421.8,610.1 423.1,617.2 424.3,599.7 425.6,560.8 426.9,576.3 428.2,618.5 429.5,629.8 430.8,584.5 432.1,561.0 433.3,607.1 434.6,556.4 435.9,571.2 437.2,579.4 438.5,556.7 439.8,571.3 441.0,577.6 442.3,576.9 443.6,617.1 444.9,614.3 446.2,627.5 447.5,635.9 448.8,584.7 450.0,606.2 451.3,569.9 452.6,603.3 453.9,564.3 455.2,565.7 456.5,536.3 457.8,546.3 459.0,571.2 460.3,577.3 461.6,581.7 462.9,579.3 464.2,580.9 465.5,623.7 466.8,591.6 468.0,537.5 469.3,601.1 470.6,617.1 471.9,542.6 473.2,580.0 474.5,559.0 475.8,593.5 477.0,574.1 478.3,598.7 479.6,555.8 480.9,582.3 482.2,575.8 483.5,614.7 484.8,549.1 486.0,614.8 487.3,550.1 488.6,592.6 489.9,538.4 491.2,560.8 492.5,590.8 493.8,576.2 495.0,562.2 496.3,520.3 497.6,556.9 498.9,544.2 500.2,578.5 501.5,626.2 502.8,587.9 504.0,558.2 505.3,545.6 506.6,595.9 507.9,523.6 509.2,572.6 510.5,578.8 511.8,565.9 513.0,540.1 514.3,532.4 515.6,580.0 516.9,519.8 518.2,537.6 519.5,556.3 520.8,593.3 522.0,556.1 523.3,576.5 524.6,586.8 525.9,569.4 527.2,529.5 528.5,535.9 529.7,578.1 531.0,599.5 532.3,572.8 533.6,551.7 534.9,573.6 536.2,547.7 537.5,582.9 538.7,548.8 540.0,570.9 541.3,583.5 542.6,596.2 543.9,565.3 545.2,564.1 546.5,535.1 547.7,532.0 549.0,533.3 550.3,509.8 551.6,573.9 552.9,575.7 554.2,518.6 555.5,583.0 556.7,574.9 558.0,572.1 559.3,545.5 560.6,588.4 561.9,522.1 563.2,544.4 564.5,578.8 565.7,589.4 567.0,499.3 568.3,589.6 569.6,529.2 570.9,604.9 572.2,591.1 573.5,546.7 574.7,537.1 576.0,528.9 577.3,533.5 578.6,544.8 579.9,591.0 581.2,561.1 582.5,513.3 583.7,512.5 585.0,574.9 586.3,555.8 587.6,574.8 588.9,547.0 590.2,531.6 591.5,515.5 592.7,497.2 594.0,517.5 595.3,585.6 596.6,535.5 597.9,517.1 599.2,553.9 600.5,483.4 601.7,544.2 603.0,530.4 604.3,533.9 605.6,528.4 606.9,522.7 608.2,488.3 609.4,506.9 610.7,537.2 612.0,579.6 613.3,593.8 614.6,524.1 615.9,520.4 617.2,532.7 618.4,551.9 619.7,532.4 621.0,508.3 622.3,563.6 623.6,532.4 624.9,568.0 626.2,559.4 627.4,496.5 628.7,578.1 630.0,505.4 631.3,501.8 632.6,525.3 633.9,489.6 635.2,536.2 636.4,486.5 637.7,570.7 639.0,579.5 640.3,535.0 641.6,506.5 642.9,561.5 644.2,500.3 645.4,543.6 646.7,515.2 648.0,524.3 649.3,518.0 650.6,521.6 651.9,511.0 653.2,551.2 654.4,565.4 655.7,576.7 657.0,567.6 658.3,525.7 659.6,541.9 660.9,510.3 662.2,597.9 663.4,526.6 664.7,509.5 666.0,556.8 667.3,503.9 668.6,541.4 669.9,558.9 671.2,559.0 672.4,549.0 673.7,521.7 675.0,541.9 676.3,514.6 677.6,486.8 678.9,525.5 680.2,481.3 681.4,534.7 682.7,516.7 684.0,514.8 685.3,559.4 686.6,496.6 687.9,559.7 689.2,500.1 690.4,514.5 691.7,549.9 693.0,571.7 694.3,531.3 695.6,572.2 696.9,514.3 698.1,560.1 699.4,524.3 700.7,476.8 702.0,541.1 703.3,521.4 704.6,516.9 705.9,518.9 707.1,532.5 708.4,562.4 709.7,531.7 711.0,524.2 712.3,522.0 713.6,480.6 714.9,518.6 716.1,509.8 717.4,571.8 718.7,524.8 720.0,496.5 721.3,534.0 722.6,510.1 723.9,550.7 725.1,476.8 726.4,536.8 727.7,529.8 729.0,521.8 730.3,534.5 731.6,475.4 732.9,536.9 734.1,505.9 735.4,515.7 736.7,518.5 738.0,493.0 739.3,524.4 740.6,502.5 741.9,529.9 743.1,481.0 744.4,561.6 745.7,527.5 747.0,482.1 748.3,472.6 749.6,521.8 750.9,551.4 752.1,530.3 753.4,541.9 754.7,552.7 756.0,527.6 757.3,524.6 758.6,465.4 759.9,534.2 761.1,516.2 762.4,526.2 763.7,529.4 765.0,498.7 766.3,481.1 767.6,498.2 768.9,560.9 770.1,524.3 771.4,513.5 772.7,556.5 774.0,445.4 775.3,501.8 776.6,466.4 777.9,522.9 779.1,526.7 780.4,549.5 781.7,516.6 783.0,487.6 784.3,505.6 785.6,506.0 786.8,518.1 788.1,512.5 789.4,519.9 790.7,553.8 792.0,496.9 793.3,515.8 794.6,539.6 795.8,496.1 797.1,483.9 798.4,531.4 799.7,552.9 801.0,446.7 802.3,471.4 803.6,468.9 804.8,513.7 806.1,519.2 807.4,500.3 808.7,504.4 810.0,501.3 811.3,515.4 812.6,534.9 813.8,456.1 815.1,466.4 816.4,437.8 817.7,489.7 819.0,460.5 820.3,503.4 821.6,517.2 822.8,484.0 824.1,485.9 825.4,510.3 826.7,479.8 828.0,463.9 829.3,470.5 830.6,527.7 831.8,503.3 833.1,520.7 834.4,479.1 835.7,520.0 837.0,462.4 838.3,523.3 839.6,514.6 840.8,483.3 842.1,539.5 843.4,468.4 844.7,489.2 846.0,432.0 847.3,512.7 848.6,493.0 849.8,512.8 851.1,499.0 852.4,521.4 853.7,512.7 855.0,503.9 856.3,460.9 857.6,481.2 858.8,488.8 860.1,512.7 861.4,543.2 862.7,519.5 864.0,453.6 865.3,479.4 866.5,482.3 867.8,489.0 869.1,504.3 870.4,499.3 871.7,462.0 873.0,408.0 874.3,465.4 875.5,465.1 876.8,494.7 878.1,500.8 879.4,516.3 880.7,459.0 882.0,471.5 883.3,498.1 884.5,536.2 885.8,505.6 887.1,548.4 888.4,487.9 889.7,502.3 891.0,542.3 892.3,504.1 893.5,508.7 894.8,485.6 896.1,483.4 897.4,517.0 898.7,495.9 900.0,434.6 901.3,510.0 902.5,445.4 903.8,473.8 905.1,442.4 906.4,455.5 907.7,510.4 909.0,514.7 910.3,443.1 911.5,470.6 912.8,468.6 914.1,505.2 915.4,480.2 916.7,515.6 918.0,480.4 919.3,493.1 920.5,474.0 921.8,460.8 923.1,463.1 924.4,452.7 925.7,482.7 927.0,477.6 928.3,455.3 929.5,502.2 930.8,425.7 932.1,498.4 933.4,455.5 934.7,483.5 936.0,535.1 937.3,526.7 938.5,507.2 939.8,457.3 941.1,484.4 942.4,432.2 943.7,484.1 945.0,516.0 946.3,464.2 947.5,468.4 948.8,505.7 950.1,462.8 951.4,476.6 952.7,515.2 954.0,495.7 955.2,459.0 956.5,476.4 957.8,509.7 959.1,506.7 960.4,479.3 961.7,447.1 963.0,502.8 964.2,452.8 965.5,495.4 966.8,526.2 968.1,486.1 969.4,481.4 970.7,453.0 972.0,463.5 973.2,424.0 974.5,463.5 975.8,480.1 977.1,511.9 978.4,490.0 979.7,487.8 981.0,440.8 982.2,499.7 983.5,459.2 984.8,465.7 986.1,520.0 987.4,513.2 988.7,491.4 990.0,428.8 991.2,429.2 992.5,464.2 993.8,436.7 995.1,517.2 996.4,478.4 997.7,488.9 999.0,448.6 1000.2,491.5 1001.5,512.4 1002.8,508.2 1004.1,488.6 1005.4,505.1 1006.7,487.2 1008.0,449.1 1009.2,448.8 1010.5,494.1 1011.8,487.7 1013.1,473.7 1014.4,518.1 1015.7,476.0 1017.0,489.1 1018.2,457.9 1019.5,433.8 1020.8,459.3 1022.1,499.8 1023.4,458.7 1024.7,459.5 1026.0,450.3 1027.2,468.1 1028.5,463.8 1029.8,446.7 1031.1,498.4 1032.4,497.6 1033.7,457.7 1035.0,495.1 1036.2,471.0 1037.5,476.1 1038.8,442.8 1040.1,428.2 1041.4,468.7 1042.7,470.5 1043.9,499.6 1045.2,457.4 1046.5,429.1 1047.8,456.7 1049.1,458.4 1050.4,476.0 1051.7,447.0 1052.9,544.0 1054.2,491.0 1055.5,400.9 1056.8,457.7 1058.1,421.5 1059.4,422.5 1060.7,450.6 1061.9,433.9 1063.2,462.5 1064.5,488.1 1065.8,476.5 1067.1,445.9 1068.4,502.8 1069.7,438.9 1070.9,483.2 1072.2,424.4 1073.5,442.2 1074.8,433.8 1076.1,510.1 1077.4,498.7 1078.7,473.3 1079.9,457.1 1081.2,460.0 1082.5,493.9 1083.8,457.8 1085.1,462.1 1086.4,437.2 1087.7,467.0 1088.9,419.5 1090.2,395.1 1091.5,445.4 1092.8,439.0 1094.1,432.3 1095.4,463.6 1096.7,482.9 1097.9,460.3 1099.2,507.4 1100.5,444.4 1101.8,504.3 1103.1,416.0 1104.4,440.0 1105.7,415.9 1106.9,462.7 1108.2,458.8 1109.5,466.0 1110.8,452.9 1112.1,474.1 1113.4,390.4 1114.7,432.5 1115.9,448.1 1117.2,430.6 1118.5,484.0 1119.8,461.7 1121.1,434.3 1122.4,492.2 1123.6,427.3 1124.9,486.2 1126.2,488.0 1127.5,474.1 1128.8,437.4 1130.1,424.8 1131.4,488.5 1132.6,424.6 1133.9,416.8 1135.2,467.9 1136.5,427.6 1137.8,439.7 1139.1,425.9 1140.4,410.6 1141.6,460.2 1142.9,478.7 1144.2,442.2 1145.5,483.6 1146.8,507.6 1148.1,430.2 1149.4,463.3 1150.6,445.4 1151.9,435.7 1153.2,463.9 1154.5,493.4 1155.8,415.9 1157.1,487.1 1158.4,447.3 1159.6,443.2 1160.9,440.0 1162.2,494.6 1163.5,422.2 1164.8,434.6 1166.1,493.7 1167.4,448.1 1168.6,435.4 1169.9,500.6 1171.2,475.8 1172.5,474.2 1173.8,434.8 1175.1,421.2 1176.4,459.6 1177.6,466.4 1178.9,461.3 1180.2,476.9 1181.5,457.2 1182.8,445.7 1184.1,475.7 1185.4,451.5 1186.6,403.0 1187.9,438.0 1189.2,408.7 1190.5,456.3 1191.8,465.6 1193.1,473.8 1194.4,503.8 1195.6,424.0 1196.9,444.3 1198.2,481.1 1199.5,410.7 1200.8,437.2 1202.1,431.9 1203.4,443.2 1204.6,388.3 1205.9,407.5 1207.2,476.4 1208.5,477.2 1209.8,415.8 1211.1,481.2 1212.3,484.9 1213.6,412.2 1214.9,411.1 1216.2,421.5 1217.5,453.8 1218.8,469.5 1220.1,422.1 1221.3,396.7 1222.6,464.3 1223.9,417.9 1225.2,443.2 1226.5,414.1 1227.8,427.7 1229.1,475.3 1230.3,478.2 1231.6,423.1 1232.9,460.4 1234.2,384.0 1235.5,467.1 1236.8,415.2 1238.1,454.3 1239.3,417.5 1240.6,472.8 1241.9,455.5 1243.2,457.8 1244.5,401.8 1245.8,428.1 1247.1,463.5 1248.3,428.7 1249.6,466.9 1250.9,456.7 1252.2,466.9 1253.5,431.3 1254.8,434.4 1256.1,437.2 1257.3,438.7 1258.6,448.6 1259.9,433.5 1261.2,428.2 1262.5,503.4 1263.8,470.9 1265.1,479.9 1266.3,417.0 1267.6,458.6 1268.9,403.2 1270.2,450.5 1271.5,412.2 1272.8,410.3 1274.1,371.7 1275.3,426.5 1276.6,496.4 1277.9,425.6 1279.2,422.0 1280.5,408.2 1281.8,451.0 1283.1,441.6 1284.3,420.9 1285.6,443.8 1286.9,415.1 1288.2,397.6 1289.5,409.9 1290.8,463.1 1292.0,465.8 1293.3,436.5 1294.6,399.4 1295.9,402.6 1297.2,439.1 1298.5,468.6 1299.8,393.9 1301.0,421.9 1302.3,461.2 1303.6,369.1 1304.9,437.5 1306.2,455.7 1307.5,477.2 1308.8,444.0 1310.0,485.6 1311.3,448.0 1312.6,418.8 1313.9,445.5 1315.2,465.3 1316.5,408.4 1317.8,410.7 1319.0,464.9 1320.3,443.9 1321.6,488.8 1322.9,435.3 1324.2,472.2 1325.5,415.4 1326.8,456.1 1328.0,464.0 1329.3,446.5 1330.6,458.1 1331.9,437.9 1333.2,475.7 1334.5,399.3 1335.8,470.3 1337.0,395.6 1338.3,389.2 1339.6,426.4 1340.9,401.2 1342.2,400.2 1343.5,385.8 1344.8,446.6 1346.0,498.6 1347.3,455.7 1348.6,454.7 1349.9,417.0 1351.2,388.9 1352.5,441.7 1353.8,473.5 1355.0,473.5 1356.3,453.2 1357.6,451.0 1358.9,390.4 1360.2,466.3 1361.5,443.7 1362.8,470.5 1364.0,383.1 1365.3,448.5 1366.6,455.2 1367.9,416.1 1369.2,488.5 1370.5,416.4 1371.8,437.4 1373.0,453.3 1374.3,469.0 1375.6,400.4 1376.9,467.3 1378.2,439.6 1379.5,410.9 1380.7,434.1 1382.0,413.4 1383.3,415.8 1384.6,417.9 1385.9,407.4 1387.2,404.1 1388.5,385.7 1389.7,402.6 1391.0,435.1 1392.3,466.3 1393.6,468.9 1394.9,414.5 1396.2,448.9 1397.5,420.9 1398.7,481.3 1400.0,385.2 1401.3,420.4 1402.6,476.5 1403.9,484.0 1405.2,407.2 1406.5,474.2 1407.7,434.5 1409.0,413.2 1410.3,393.8 1411.6,396.7 1412.9,467.7 1414.2,385.1 1415.5,453.8 1416.7,405.5 1418.0,453.0 1419.3,426.8" fill="none" stroke="#7f55bd" stroke-width="2.7" stroke-linejoin="miter" stroke-miterlimit="12"/><polyline points="135.1,1118.2 136.4,1042.7 137.7,974.6 139.0,952.3 140.2,882.2 141.5,940.8 142.8,859.0 144.1,836.3 145.4,802.6 146.7,822.9 148.0,791.7 149.2,768.8 150.5,789.1 151.8,828.5 153.1,801.8 154.4,754.3 155.7,797.3 157.0,776.0 158.2,761.5 159.5,777.0 160.8,742.3 162.1,764.5 163.4,787.7 164.7,762.5 166.0,800.1 167.2,768.2 168.5,790.0 169.8,725.4 171.1,746.3 172.4,711.6 173.7,714.2 175.0,706.6 176.2,672.7 177.5,728.1 178.8,696.8 180.1,715.0 181.4,725.0 182.7,745.3 183.9,740.2 185.2,657.1 186.5,669.6 187.8,708.9 189.1,691.8 190.4,703.4 191.7,700.2 192.9,688.6 194.2,727.5 195.5,654.7 196.8,715.0 198.1,660.7 199.4,734.4 200.7,649.1 201.9,692.7 203.2,686.4 204.5,697.0 205.8,665.1 207.1,718.8 208.4,669.4 209.7,693.8 210.9,688.0 212.2,625.8 213.5,648.5 214.8,618.0 216.1,637.8 217.4,686.9 218.7,625.5 219.9,680.6 221.2,636.4 222.5,622.7 223.8,681.2 225.1,648.8 226.4,679.1 227.7,691.0 228.9,647.9 230.2,655.5 231.5,627.7 232.8,627.2 234.1,652.3 235.4,654.8 236.7,606.3 237.9,622.0 239.2,648.2 240.5,637.3 241.8,609.0 243.1,640.9 244.4,636.0 245.7,670.6 246.9,665.0 248.2,626.9 249.5,588.4 250.8,642.7 252.1,598.0 253.4,603.1 254.7,621.7 255.9,623.8 257.2,625.1 258.5,621.2 259.8,616.9 261.1,647.1 262.4,635.6 263.6,652.4 264.9,660.0 266.2,603.0 267.5,588.2 268.8,578.3 270.1,613.1 271.4,650.3 272.6,612.6 273.9,600.9 275.2,628.9 276.5,606.8 277.8,623.9 279.1,583.7 280.4,616.3 281.6,581.8 282.9,579.6 284.2,592.1 285.5,568.7 286.8,592.0 288.1,598.0 289.4,585.5 290.6,579.8 291.9,601.7 293.2,634.5 294.5,568.3 295.8,594.9 297.1,589.0 298.4,606.7 299.6,613.2 300.9,563.5 302.2,587.7 303.5,619.1 304.8,555.4 306.1,618.9 307.4,600.5 308.6,598.8 309.9,601.4 311.2,584.3 312.5,601.4 313.8,600.7 315.1,580.2 316.4,608.1 317.6,526.5 318.9,565.9 320.2,536.8 321.5,553.3 322.8,583.4 324.1,594.1 325.4,605.2 326.6,588.9 327.9,570.7 329.2,551.5 330.5,572.0 331.8,548.2 333.1,613.5 334.4,557.8 335.6,569.1 336.9,539.5 338.2,543.3 339.5,586.1 340.8,525.0 342.1,530.4 343.4,571.1 344.6,583.5 345.9,532.8 347.2,525.5 348.5,558.5 349.8,566.8 351.1,526.6 352.3,553.7 353.6,535.0 354.9,573.3 356.2,551.7 357.5,552.2 358.8,549.4 360.1,537.1 361.3,594.2 362.6,535.6 363.9,549.6 365.2,572.8 366.5,583.0 367.8,514.2 369.1,532.1 370.3,535.4 371.6,558.2 372.9,540.1 374.2,509.9 375.5,552.8 376.8,577.5 378.1,556.3 379.3,548.5 380.6,547.9 381.9,559.3 383.2,526.7 384.5,516.4 385.8,548.3 387.1,530.9 388.3,514.9 389.6,551.3 390.9,569.2 392.2,538.7 393.5,559.5 394.8,525.5 396.1,547.0 397.3,518.0 398.6,523.9 399.9,534.5 401.2,529.8 402.5,528.3 403.8,506.8 405.1,537.4 406.3,521.5 407.6,561.7 408.9,565.0 410.2,533.0 411.5,552.6 412.8,521.9 414.1,519.3 415.3,496.9 416.6,563.2 417.9,532.4 419.2,578.3 420.5,525.1 421.8,548.9 423.1,521.5 424.3,506.0 425.6,537.2 426.9,486.6 428.2,497.8 429.5,502.1 430.8,525.0 432.1,500.2 433.3,536.6 434.6,531.2 435.9,494.1 437.2,483.3 438.5,525.9 439.8,501.9 441.0,555.1 442.3,565.5 443.6,507.3 444.9,493.2 446.2,582.5 447.5,549.2 448.8,519.3 450.0,496.6 451.3,495.5 452.6,521.4 453.9,530.5 455.2,478.2 456.5,511.4 457.8,486.1 459.0,485.9 460.3,492.2 461.6,482.7 462.9,525.4 464.2,474.4 465.5,534.3 466.8,519.8 468.0,541.9 469.3,520.3 470.6,540.9 471.9,536.2 473.2,491.9 474.5,474.2 475.8,501.2 477.0,531.7 478.3,556.8 479.6,484.1 480.9,516.8 482.2,528.6 483.5,515.8 484.8,532.3 486.0,526.9 487.3,469.6 488.6,502.7 489.9,475.5 491.2,506.6 492.5,499.5 493.8,491.1 495.0,469.2 496.3,486.6 497.6,551.1 498.9,508.5 500.2,490.2 501.5,515.9 502.8,516.7 504.0,552.1 505.3,474.9 506.6,466.6 507.9,458.4 509.2,472.0 510.5,502.5 511.8,543.3 513.0,524.9 514.3,509.1 515.6,539.0 516.9,463.5 518.2,487.8 519.5,465.0 520.8,475.0 522.0,485.2 523.3,506.8 524.6,461.1 525.9,474.4 527.2,498.1 528.5,494.5 529.7,513.9 531.0,468.8 532.3,557.3 533.6,473.4 534.9,529.8 536.2,514.6 537.5,469.3 538.7,543.3 540.0,471.0 541.3,491.0 542.6,458.0 543.9,465.5 545.2,455.0 546.5,475.6 547.7,499.7 549.0,516.7 550.3,550.7 551.6,503.6 552.9,503.2 554.2,527.6 555.5,456.2 556.7,493.4 558.0,534.5 559.3,460.5 560.6,513.4 561.9,491.7 563.2,490.4 564.5,498.9 565.7,483.5 567.0,488.3 568.3,498.7 569.6,464.9 570.9,499.5 572.2,497.2 573.5,458.6 574.7,447.4 576.0,475.7 577.3,474.2 578.6,525.9 579.9,506.4 581.2,458.1 582.5,481.3 583.7,498.7 585.0,491.2 586.3,450.2 587.6,502.3 588.9,501.3 590.2,492.3 591.5,475.9 592.7,518.0 594.0,510.2 595.3,431.8 596.6,488.2 597.9,523.4 599.2,487.0 600.5,446.4 601.7,508.2 603.0,465.5 604.3,497.6 605.6,452.9 606.9,463.0 608.2,484.9 609.4,444.1 610.7,459.5 612.0,501.8 613.3,497.2 614.6,445.3 615.9,442.6 617.2,495.4 618.4,418.8 619.7,502.8 621.0,513.3 622.3,497.7 623.6,456.0 624.9,495.3 626.2,439.2 627.4,489.6 628.7,439.4 630.0,526.7 631.3,439.6 632.6,447.9 633.9,451.8 635.2,477.9 636.4,455.8 637.7,423.7 639.0,479.5 640.3,495.5 641.6,472.5 642.9,490.0 644.2,502.8 645.4,492.7 646.7,467.1 648.0,469.1 649.3,469.7 650.6,417.6 651.9,471.9 653.2,431.5 654.4,489.4 655.7,427.4 657.0,452.7 658.3,504.0 659.6,450.6 660.9,450.3 662.2,474.9 663.4,488.8 664.7,492.9 666.0,430.2 667.3,513.8 668.6,446.5 669.9,462.0 671.2,450.2 672.4,475.5 673.7,484.6 675.0,510.8 676.3,466.9 677.6,458.1 678.9,453.1 680.2,418.7 681.4,420.6 682.7,466.3 684.0,471.2 685.3,436.5 686.6,485.5 687.9,473.2 689.2,449.3 690.4,425.7 691.7,495.0 693.0,494.4 694.3,484.9 695.6,491.8 696.9,499.3 698.1,495.9 699.4,419.9 700.7,422.0 702.0,484.4 703.3,469.3 704.6,441.7 705.9,405.0 707.1,492.3 708.4,450.7 709.7,460.0 711.0,419.4 712.3,483.2 713.6,454.1 714.9,421.9 716.1,441.3 717.4,489.5 718.7,501.9 720.0,465.0 721.3,463.8 722.6,428.5 723.9,434.8 725.1,465.1 726.4,435.6 727.7,412.5 729.0,422.4 730.3,447.4 731.6,478.8 732.9,458.0 734.1,479.4 735.4,473.8 736.7,473.8 738.0,431.3 739.3,431.3 740.6,438.2 741.9,439.1 743.1,505.1 744.4,425.3 745.7,497.6 747.0,481.9 748.3,429.7 749.6,441.8 750.9,426.1 752.1,418.5 753.4,422.4 754.7,447.0 756.0,427.7 757.3,440.8 758.6,460.4 759.9,479.9 761.1,463.0 762.4,448.2 763.7,452.0 765.0,444.2 766.3,444.0 767.6,436.7 768.9,456.0 770.1,422.6 771.4,429.6 772.7,475.1 774.0,453.7 775.3,429.8 776.6,423.5 777.9,469.7 779.1,440.2 780.4,467.6 781.7,403.5 783.0,485.5 784.3,469.6 785.6,431.8 786.8,447.3 788.1,454.3 789.4,434.7 790.7,444.8 792.0,480.8 793.3,442.8 794.6,436.9 795.8,416.0 797.1,435.9 798.4,458.1 799.7,470.1 801.0,458.9 802.3,464.9 803.6,383.4 804.8,405.3 806.1,415.8 807.4,433.6 808.7,423.2 810.0,456.7 811.3,450.3 812.6,444.4 813.8,467.5 815.1,430.9 816.4,466.5 817.7,419.2 819.0,412.5 820.3,457.8 821.6,443.5 822.8,438.6 824.1,450.8 825.4,470.2 826.7,486.6 828.0,446.8 829.3,437.8 830.6,414.0 831.8,429.3 833.1,440.8 834.4,436.1 835.7,472.0 837.0,446.6 838.3,431.3 839.6,470.0 840.8,448.3 842.1,474.2 843.4,472.2 844.7,450.8 846.0,480.4 847.3,404.6 848.6,481.1 849.8,466.3 851.1,461.5 852.4,414.9 853.7,391.2 855.0,448.8 856.3,450.1 857.6,479.7 858.8,453.7 860.1,411.3 861.4,446.2 862.7,447.0 864.0,413.7 865.3,424.1 866.5,435.4 867.8,418.0 869.1,466.5 870.4,451.3 871.7,446.7 873.0,449.5 874.3,426.2 875.5,427.1 876.8,442.5 878.1,421.1 879.4,397.6 880.7,407.4 882.0,423.1 883.3,427.6 884.5,396.7 885.8,430.2 887.1,442.0 888.4,415.1 889.7,446.7 891.0,429.9 892.3,436.0 893.5,391.9 894.8,407.8 896.1,407.6 897.4,445.9 898.7,458.5 900.0,424.4 901.3,448.9 902.5,431.0 903.8,438.2 905.1,412.2 906.4,420.6 907.7,411.3 909.0,448.6 910.3,452.2 911.5,437.2 912.8,399.3 914.1,407.0 915.4,410.9 916.7,453.1 918.0,416.2 919.3,397.5 920.5,376.7 921.8,445.0 923.1,431.0 924.4,458.2 925.7,462.9 927.0,475.6 928.3,444.6 929.5,436.2 930.8,384.0 932.1,395.9 933.4,417.0 934.7,403.4 936.0,425.8 937.3,377.5 938.5,405.5 939.8,445.1 941.1,459.8 942.4,441.3 943.7,400.8 945.0,422.8 946.3,455.3 947.5,409.2 948.8,469.3 950.1,432.1 951.4,433.6 952.7,404.2 954.0,421.9 955.2,429.6 956.5,433.4 957.8,374.3 959.1,467.3 960.4,422.6 961.7,399.2 963.0,357.9 964.2,388.3 965.5,413.6 966.8,421.4 968.1,418.4 969.4,451.9 970.7,398.8 972.0,460.8 973.2,456.7 974.5,422.1 975.8,433.2 977.1,376.8 978.4,450.6 979.7,392.0 981.0,448.5 982.2,404.8 983.5,406.7 984.8,402.6 986.1,444.9 987.4,362.8 988.7,450.4 990.0,383.3 991.2,420.1 992.5,404.6 993.8,432.4 995.1,429.5 996.4,463.8 997.7,402.6 999.0,407.4 1000.2,358.6 1001.5,432.2 1002.8,432.7 1004.1,454.6 1005.4,452.6 1006.7,459.7 1008.0,427.1 1009.2,431.9 1010.5,366.2 1011.8,395.5 1013.1,455.0 1014.4,407.7 1015.7,438.5 1017.0,370.4 1018.2,426.5 1019.5,409.1 1020.8,423.5 1022.1,398.5 1023.4,390.3 1024.7,405.1 1026.0,463.5 1027.2,447.3 1028.5,432.7 1029.8,423.8 1031.1,405.3 1032.4,409.2 1033.7,419.8 1035.0,439.6 1036.2,410.8 1037.5,423.0 1038.8,388.1 1040.1,420.2 1041.4,379.2 1042.7,403.8 1043.9,409.8 1045.2,364.7 1046.5,427.6 1047.8,396.4 1049.1,358.5 1050.4,411.3 1051.7,402.4 1052.9,417.8 1054.2,418.4 1055.5,423.7 1056.8,370.1 1058.1,416.6 1059.4,354.1 1060.7,383.4 1061.9,414.8 1063.2,409.1 1064.5,389.3 1065.8,423.0 1067.1,385.5 1068.4,405.6 1069.7,392.6 1070.9,391.0 1072.2,417.5 1073.5,398.7 1074.8,418.4 1076.1,392.5 1077.4,407.7 1078.7,371.5 1079.9,374.1 1081.2,394.2 1082.5,371.0 1083.8,363.8 1085.1,403.6 1086.4,411.5 1087.7,433.2 1088.9,395.9 1090.2,348.1 1091.5,363.8 1092.8,436.3 1094.1,380.0 1095.4,395.8 1096.7,430.8 1097.9,367.3 1099.2,388.4 1100.5,377.0 1101.8,384.9 1103.1,422.2 1104.4,392.9 1105.7,384.9 1106.9,431.5 1108.2,427.7 1109.5,410.3 1110.8,385.6 1112.1,447.6 1113.4,385.6 1114.7,384.3 1115.9,417.3 1117.2,390.0 1118.5,433.2 1119.8,422.8 1121.1,395.6 1122.4,389.8 1123.6,379.4 1124.9,376.7 1126.2,421.7 1127.5,401.7 1128.8,378.4 1130.1,409.0 1131.4,409.7 1132.6,361.6 1133.9,345.5 1135.2,378.3 1136.5,422.0 1137.8,418.7 1139.1,372.5 1140.4,410.0 1141.6,350.7 1142.9,409.7 1144.2,411.6 1145.5,441.2 1146.8,406.6 1148.1,399.7 1149.4,382.4 1150.6,408.8 1151.9,391.6 1153.2,352.2 1154.5,385.1 1155.8,445.9 1157.1,417.6 1158.4,414.5 1159.6,417.2 1160.9,390.6 1162.2,428.5 1163.5,406.7 1164.8,400.7 1166.1,427.4 1167.4,369.9 1168.6,420.2 1169.9,426.9 1171.2,377.9 1172.5,397.0 1173.8,426.5 1175.1,433.1 1176.4,405.4 1177.6,381.5 1178.9,367.4 1180.2,362.4 1181.5,392.2 1182.8,421.4 1184.1,433.7 1185.4,411.7 1186.6,397.6 1187.9,390.5 1189.2,385.3 1190.5,404.2 1191.8,427.6 1193.1,414.6 1194.4,365.5 1195.6,380.0 1196.9,412.6 1198.2,342.1 1199.5,398.0 1200.8,357.9 1202.1,341.7 1203.4,406.3 1204.6,452.0 1205.9,413.8 1207.2,397.9 1208.5,364.0 1209.8,382.4 1211.1,400.0 1212.3,401.2 1213.6,418.5 1214.9,404.3 1216.2,372.1 1217.5,359.1 1218.8,363.4 1220.1,357.5 1221.3,341.4 1222.6,376.8 1223.9,361.0 1225.2,400.3 1226.5,378.0 1227.8,351.9 1229.1,383.1 1230.3,381.3 1231.6,394.0 1232.9,420.5 1234.2,384.5 1235.5,432.6 1236.8,368.2 1238.1,372.0 1239.3,376.7 1240.6,360.0 1241.9,377.2 1243.2,397.0 1244.5,402.2 1245.8,413.7 1247.1,364.6 1248.3,358.7 1249.6,358.1 1250.9,365.1 1252.2,386.3 1253.5,358.1 1254.8,398.5 1256.1,358.8 1257.3,391.3 1258.6,381.9 1259.9,351.3 1261.2,357.3 1262.5,391.2 1263.8,425.5 1265.1,390.5 1266.3,378.6 1267.6,401.0 1268.9,396.2 1270.2,387.7 1271.5,370.1 1272.8,366.2 1274.1,360.7 1275.3,400.1 1276.6,403.9 1277.9,393.2 1279.2,398.4 1280.5,410.5 1281.8,323.4 1283.1,344.0 1284.3,413.2 1285.6,415.7 1286.9,385.3 1288.2,364.3 1289.5,394.8 1290.8,412.8 1292.0,339.5 1293.3,408.0 1294.6,345.4 1295.9,382.6 1297.2,388.7 1298.5,378.2 1299.8,396.7 1301.0,395.3 1302.3,404.1 1303.6,368.2 1304.9,363.9 1306.2,368.4 1307.5,348.7 1308.8,397.5 1310.0,400.8 1311.3,377.4 1312.6,363.3 1313.9,373.3 1315.2,385.3 1316.5,385.4 1317.8,358.6 1319.0,395.7 1320.3,362.9 1321.6,380.0 1322.9,371.2 1324.2,389.4 1325.5,406.8 1326.8,391.7 1328.0,412.0 1329.3,374.3 1330.6,363.0 1331.9,358.5 1333.2,355.1 1334.5,377.3 1335.8,410.4 1337.0,352.4 1338.3,342.4 1339.6,388.7 1340.9,385.9 1342.2,354.4 1343.5,351.4 1344.8,398.0 1346.0,355.9 1347.3,407.3 1348.6,423.5 1349.9,338.6 1351.2,398.5 1352.5,421.8 1353.8,375.6 1355.0,378.9 1356.3,362.3 1357.6,372.8 1358.9,394.0 1360.2,389.0 1361.5,405.7 1362.8,413.9 1364.0,385.0 1365.3,373.0 1366.6,372.7 1367.9,382.1 1369.2,350.0 1370.5,382.4 1371.8,389.1 1373.0,329.2 1374.3,347.1 1375.6,344.1 1376.9,332.8 1378.2,355.2 1379.5,349.1 1380.7,344.9 1382.0,322.3 1383.3,413.0 1384.6,375.3 1385.9,422.3 1387.2,357.1 1388.5,364.8 1389.7,362.8 1391.0,352.2 1392.3,374.9 1393.6,374.6 1394.9,344.6 1396.2,335.2 1397.5,334.7 1398.7,357.1 1400.0,394.5 1401.3,378.3 1402.6,380.0 1403.9,348.6 1405.2,407.4 1406.5,358.7 1407.7,350.3 1409.0,351.8 1410.3,390.0 1411.6,338.2 1412.9,379.5 1414.2,368.4 1415.5,398.2 1416.7,362.1 1418.0,397.2 1419.3,393.2" fill="none" stroke="#3e955a" stroke-width="2.7" stroke-linejoin="miter" stroke-miterlimit="12"/><polyline points="135.1,1119.2 136.4,1066.8 137.7,940.0 139.0,980.4 140.2,910.0 141.5,863.7 142.8,898.9 144.1,839.3 145.4,869.5 146.7,860.2 148.0,821.4 149.2,806.3 150.5,797.2 151.8,843.7 153.1,826.0 154.4,818.9 155.7,758.2 157.0,805.2 158.2,800.7 159.5,772.3 160.8,793.2 162.1,793.2 163.4,785.8 164.7,768.9 166.0,781.3 167.2,761.0 168.5,784.3 169.8,760.7 171.1,742.5 172.4,745.7 173.7,729.6 175.0,777.0 176.2,747.4 177.5,744.2 178.8,681.1 180.1,726.9 181.4,721.8 182.7,758.8 183.9,720.7 185.2,750.8 186.5,707.8 187.8,731.9 189.1,711.2 190.4,646.4 191.7,695.4 192.9,678.7 194.2,710.2 195.5,679.1 196.8,693.1 198.1,659.8 199.4,652.1 200.7,680.8 201.9,644.6 203.2,698.8 204.5,678.0 205.8,684.0 207.1,699.5 208.4,672.6 209.7,674.8 210.9,638.4 212.2,695.3 213.5,682.2 214.8,638.2 216.1,641.7 217.4,661.0 218.7,712.1 219.9,685.8 221.2,643.0 222.5,680.1 223.8,634.5 225.1,623.7 226.4,666.7 227.7,633.6 228.9,631.3 230.2,652.3 231.5,664.9 232.8,682.2 234.1,677.9 235.4,684.6 236.7,677.6 237.9,642.4 239.2,629.8 240.5,657.1 241.8,691.7 243.1,685.2 244.4,654.2 245.7,657.8 246.9,647.5 248.2,654.2 249.5,642.2 250.8,656.6 252.1,620.9 253.4,649.1 254.7,602.0 255.9,645.8 257.2,656.7 258.5,629.6 259.8,641.5 261.1,584.0 262.4,644.6 263.6,641.0 264.9,609.7 266.2,645.1 267.5,640.1 268.8,658.3 270.1,623.8 271.4,629.3 272.6,594.6 273.9,644.7 275.2,640.7 276.5,632.9 277.8,620.0 279.1,588.2 280.4,607.6 281.6,566.2 282.9,651.5 284.2,554.2 285.5,608.0 286.8,636.2 288.1,579.4 289.4,617.5 290.6,602.7 291.9,603.9 293.2,557.3 294.5,623.9 295.8,562.9 297.1,603.4 298.4,595.3 299.6,570.4 300.9,560.0 302.2,637.6 303.5,577.0 304.8,605.3 306.1,607.3 307.4,594.6 308.6,558.8 309.9,577.6 311.2,589.4 312.5,604.0 313.8,561.1 315.1,538.2 316.4,619.3 317.6,605.0 318.9,568.0 320.2,591.2 321.5,598.5 322.8,604.0 324.1,563.8 325.4,572.0 326.6,579.5 327.9,591.4 329.2,538.1 330.5,558.4 331.8,549.8 333.1,592.8 334.4,582.8 335.6,577.2 336.9,596.8 338.2,583.3 339.5,552.4 340.8,548.5 342.1,611.9 343.4,566.0 344.6,563.8 345.9,610.0 347.2,627.0 348.5,557.2 349.8,543.0 351.1,541.6 352.3,563.0 353.6,525.9 354.9,585.6 356.2,564.5 357.5,573.6 358.8,577.0 360.1,544.3 361.3,561.5 362.6,550.3 363.9,540.6 365.2,587.7 366.5,554.7 367.8,515.5 369.1,514.8 370.3,572.0 371.6,594.6 372.9,591.8 374.2,581.8 375.5,609.8 376.8,575.7 378.1,522.0 379.3,576.9 380.6,584.1 381.9,552.4 383.2,555.7 384.5,577.6 385.8,584.3 387.1,589.1 388.3,563.7 389.6,556.2 390.9,561.3 392.2,535.1 393.5,569.6 394.8,531.8 396.1,552.2 397.3,586.9 398.6,552.8 399.9,584.0 401.2,580.4 402.5,518.6 403.8,546.5 405.1,603.0 406.3,506.1 407.6,551.9 408.9,593.5 410.2,545.7 411.5,547.3 412.8,520.0 414.1,505.9 415.3,493.0 416.6,574.2 417.9,557.1 419.2,561.8 420.5,550.0 421.8,521.8 423.1,535.5 424.3,497.4 425.6,564.0 426.9,566.5 428.2,575.7 429.5,525.4 430.8,524.8 432.1,556.3 433.3,546.5 434.6,490.8 435.9,503.6 437.2,550.4 438.5,585.2 439.8,492.1 441.0,560.6 442.3,501.2 443.6,501.5 444.9,560.8 446.2,521.4 447.5,492.1 448.8,595.8 450.0,513.7 451.3,502.8 452.6,477.3 453.9,594.0 455.2,540.9 456.5,508.1 457.8,499.9 459.0,481.4 460.3,470.6 461.6,508.5 462.9,517.0 464.2,495.5 465.5,495.7 466.8,503.2 468.0,519.9 469.3,500.3 470.6,566.7 471.9,499.5 473.2,503.6 474.5,468.4 475.8,565.5 477.0,555.9 478.3,514.6 479.6,544.4 480.9,522.4 482.2,536.9 483.5,544.4 484.8,540.4 486.0,497.8 487.3,511.9 488.6,533.7 489.9,526.2 491.2,543.2 492.5,488.5 493.8,549.8 495.0,532.7 496.3,504.1 497.6,486.3 498.9,470.0 500.2,482.6 501.5,552.8 502.8,503.4 504.0,542.9 505.3,535.9 506.6,459.1 507.9,536.2 509.2,500.9 510.5,469.1 511.8,497.7 513.0,493.6 514.3,489.9 515.6,500.9 516.9,514.0 518.2,519.2 519.5,534.1 520.8,476.2 522.0,528.6 523.3,499.7 524.6,506.6 525.9,492.5 527.2,518.5 528.5,495.1 529.7,536.5 531.0,533.8 532.3,505.3 533.6,534.9 534.9,530.8 536.2,501.1 537.5,536.9 538.7,489.6 540.0,471.3 541.3,535.2 542.6,485.8 543.9,530.1 545.2,504.0 546.5,524.1 547.7,486.2 549.0,482.2 550.3,540.5 551.6,469.0 552.9,487.4 554.2,481.4 555.5,551.4 556.7,472.7 558.0,470.1 559.3,523.1 560.6,507.0 561.9,524.6 563.2,509.3 564.5,449.4 565.7,488.7 567.0,467.7 568.3,478.2 569.6,527.3 570.9,484.5 572.2,469.6 573.5,508.4 574.7,453.8 576.0,445.5 577.3,533.4 578.6,520.6 579.9,454.9 581.2,548.3 582.5,459.0 583.7,468.9 585.0,463.6 586.3,529.0 587.6,475.8 588.9,497.9 590.2,501.4 591.5,508.8 592.7,494.9 594.0,463.7 595.3,510.8 596.6,552.9 597.9,491.8 599.2,463.1 600.5,481.3 601.7,467.3 603.0,514.4 604.3,515.8 605.6,513.9 606.9,464.7 608.2,471.8 609.4,483.6 610.7,518.7 612.0,435.6 613.3,492.0 614.6,473.0 615.9,509.0 617.2,469.4 618.4,525.3 619.7,522.2 621.0,489.2 622.3,477.9 623.6,471.3 624.9,472.7 626.2,493.2 627.4,489.1 628.7,487.6 630.0,529.6 631.3,450.8 632.6,460.4 633.9,446.6 635.2,472.5 636.4,486.9 637.7,438.9 639.0,534.4 640.3,444.6 641.6,450.1 642.9,459.9 644.2,450.3 645.4,524.6 646.7,464.6 648.0,516.8 649.3,503.2 650.6,472.8 651.9,483.5 653.2,461.0 654.4,459.1 655.7,489.9 657.0,456.7 658.3,457.1 659.6,505.7 660.9,458.2 662.2,491.3 663.4,524.9 664.7,494.4 666.0,450.4 667.3,476.5 668.6,457.6 669.9,463.3 671.2,459.6 672.4,491.8 673.7,466.7 675.0,463.3 676.3,424.3 677.6,440.2 678.9,463.0 680.2,487.3 681.4,469.8 682.7,479.7 684.0,476.1 685.3,479.9 686.6,495.9 687.9,462.5 689.2,489.7 690.4,467.3 691.7,465.9 693.0,470.3 694.3,442.4 695.6,449.0 696.9,476.6 698.1,450.1 699.4,467.3 700.7,477.2 702.0,485.2 703.3,430.4 704.6,477.1 705.9,486.9 707.1,436.0 708.4,489.0 709.7,470.8 711.0,490.1 712.3,490.6 713.6,460.4 714.9,504.4 716.1,497.8 717.4,443.3 718.7,428.6 720.0,492.0 721.3,487.5 722.6,461.3 723.9,426.8 725.1,485.7 726.4,473.3 727.7,474.1 729.0,433.6 730.3,470.7 731.6,432.7 732.9,432.6 734.1,477.1 735.4,427.1 736.7,504.1 738.0,464.9 739.3,442.3 740.6,467.6 741.9,445.7 743.1,457.9 744.4,439.6 745.7,484.1 747.0,442.2 748.3,435.6 749.6,507.0 750.9,468.0 752.1,422.6 753.4,430.8 754.7,437.8 756.0,448.0 757.3,494.8 758.6,426.9 759.9,450.6 761.1,489.4 762.4,454.4 763.7,462.3 765.0,431.5 766.3,426.3 767.6,468.9 768.9,483.2 770.1,432.9 771.4,492.9 772.7,455.1 774.0,468.6 775.3,471.0 776.6,457.3 777.9,458.8 779.1,426.7 780.4,484.0 781.7,497.0 783.0,425.1 784.3,423.4 785.6,508.0 786.8,472.0 788.1,478.3 789.4,458.3 790.7,451.8 792.0,459.3 793.3,444.9 794.6,494.2 795.8,501.4 797.1,449.0 798.4,453.4 799.7,461.1 801.0,475.3 802.3,429.2 803.6,455.5 804.8,435.4 806.1,425.6 807.4,487.8 808.7,464.4 810.0,405.9 811.3,445.2 812.6,474.0 813.8,468.7 815.1,409.6 816.4,456.2 817.7,462.6 819.0,496.8 820.3,412.4 821.6,500.6 822.8,455.3 824.1,416.0 825.4,450.2 826.7,478.6 828.0,446.6 829.3,460.4 830.6,428.0 831.8,403.1 833.1,451.7 834.4,431.9 835.7,489.1 837.0,443.0 838.3,465.1 839.6,444.7 840.8,434.8 842.1,428.3 843.4,499.6 844.7,462.1 846.0,446.9 847.3,412.3 848.6,438.6 849.8,433.8 851.1,463.6 852.4,450.1 853.7,471.7 855.0,456.1 856.3,451.0 857.6,487.4 858.8,414.0 860.1,428.8 861.4,433.5 862.7,455.2 864.0,454.8 865.3,423.5 866.5,408.4 867.8,494.2 869.1,419.2 870.4,413.1 871.7,469.6 873.0,480.7 874.3,479.7 875.5,483.9 876.8,466.7 878.1,464.3 879.4,440.3 880.7,472.6 882.0,476.3 883.3,420.2 884.5,468.2 885.8,480.1 887.1,398.8 888.4,453.8 889.7,446.9 891.0,446.3 892.3,444.8 893.5,403.5 894.8,397.0 896.1,456.3 897.4,414.6 898.7,424.7 900.0,442.8 901.3,444.4 902.5,419.7 903.8,418.6 905.1,398.3 906.4,478.6 907.7,454.8 909.0,459.7 910.3,402.2 911.5,462.4 912.8,444.5 914.1,443.7 915.4,397.8 916.7,437.6 918.0,463.0 919.3,432.7 920.5,456.9 921.8,434.6 923.1,426.0 924.4,425.7 925.7,466.1 927.0,427.2 928.3,475.2 929.5,399.3 930.8,475.6 932.1,453.3 933.4,405.0 934.7,423.7 936.0,413.1 937.3,437.2 938.5,405.4 939.8,430.7 941.1,405.5 942.4,406.9 943.7,457.6 945.0,475.3 946.3,439.9 947.5,404.5 948.8,434.1 950.1,441.3 951.4,386.9 952.7,415.2 954.0,392.4 955.2,433.9 956.5,461.5 957.8,422.3 959.1,463.8 960.4,421.4 961.7,392.5 963.0,441.1 964.2,388.2 965.5,439.5 966.8,438.0 968.1,395.6 969.4,419.4 970.7,398.6 972.0,448.5 973.2,437.4 974.5,384.8 975.8,478.2 977.1,380.9 978.4,407.1 979.7,389.2 981.0,416.0 982.2,407.7 983.5,400.2 984.8,419.9 986.1,405.6 987.4,410.8 988.7,433.6 990.0,395.5 991.2,383.7 992.5,450.1 993.8,403.0 995.1,453.4 996.4,377.0 997.7,450.4 999.0,449.6 1000.2,449.1 1001.5,380.7 1002.8,447.8 1004.1,402.9 1005.4,431.2 1006.7,413.9 1008.0,448.0 1009.2,463.0 1010.5,441.3 1011.8,493.4 1013.1,399.6 1014.4,425.0 1015.7,442.7 1017.0,439.3 1018.2,405.5 1019.5,461.2 1020.8,450.2 1022.1,401.1 1023.4,437.5 1024.7,470.9 1026.0,430.3 1027.2,440.8 1028.5,394.7 1029.8,444.8 1031.1,411.0 1032.4,459.0 1033.7,441.1 1035.0,373.9 1036.2,406.9 1037.5,399.8 1038.8,444.2 1040.1,397.0 1041.4,372.6 1042.7,457.4 1043.9,461.8 1045.2,450.8 1046.5,368.9 1047.8,415.4 1049.1,434.8 1050.4,470.3 1051.7,390.1 1052.9,387.2 1054.2,410.5 1055.5,421.2 1056.8,467.9 1058.1,452.8 1059.4,410.6 1060.7,461.8 1061.9,444.8 1063.2,387.9 1064.5,368.5 1065.8,436.0 1067.1,423.6 1068.4,420.8 1069.7,393.9 1070.9,392.2 1072.2,451.1 1073.5,388.6 1074.8,408.8 1076.1,387.7 1077.4,391.4 1078.7,413.1 1079.9,413.4 1081.2,435.1 1082.5,405.0 1083.8,437.4 1085.1,424.3 1086.4,431.0 1087.7,427.8 1088.9,417.2 1090.2,415.5 1091.5,428.4 1092.8,411.5 1094.1,377.1 1095.4,392.9 1096.7,412.1 1097.9,432.3 1099.2,402.1 1100.5,363.7 1101.8,369.3 1103.1,373.0 1104.4,408.4 1105.7,385.9 1106.9,388.4 1108.2,436.1 1109.5,385.0 1110.8,407.2 1112.1,387.0 1113.4,406.0 1114.7,424.7 1115.9,380.0 1117.2,373.7 1118.5,427.7 1119.8,424.4 1121.1,397.9 1122.4,429.4 1123.6,436.8 1124.9,454.7 1126.2,434.7 1127.5,438.8 1128.8,438.0 1130.1,389.7 1131.4,436.7 1132.6,450.3 1133.9,377.1 1135.2,372.1 1136.5,439.8 1137.8,416.6 1139.1,434.0 1140.4,383.3 1141.6,389.0 1142.9,447.2 1144.2,448.0 1145.5,431.2 1146.8,353.6 1148.1,394.9 1149.4,409.3 1150.6,379.1 1151.9,402.4 1153.2,414.3 1154.5,413.8 1155.8,388.1 1157.1,430.1 1158.4,385.8 1159.6,426.7 1160.9,430.5 1162.2,430.0 1163.5,397.9 1164.8,435.6 1166.1,437.6 1167.4,410.9 1168.6,408.7 1169.9,394.6 1171.2,391.0 1172.5,383.5 1173.8,400.1 1175.1,396.1 1176.4,426.2 1177.6,375.2 1178.9,428.5 1180.2,435.5 1181.5,430.3 1182.8,426.9 1184.1,383.6 1185.4,391.7 1186.6,441.2 1187.9,414.1 1189.2,408.9 1190.5,442.3 1191.8,402.7 1193.1,410.2 1194.4,368.2 1195.6,401.0 1196.9,408.4 1198.2,373.6 1199.5,421.5 1200.8,399.6 1202.1,399.7 1203.4,368.5 1204.6,365.6 1205.9,371.4 1207.2,393.3 1208.5,404.7 1209.8,417.7 1211.1,356.2 1212.3,457.4 1213.6,373.3 1214.9,434.1 1216.2,400.1 1217.5,381.4 1218.8,405.3 1220.1,431.4 1221.3,423.5 1222.6,412.6 1223.9,358.8 1225.2,347.3 1226.5,388.4 1227.8,417.2 1229.1,361.0 1230.3,437.5 1231.6,434.2 1232.9,378.4 1234.2,384.6 1235.5,367.8 1236.8,372.5 1238.1,371.6 1239.3,403.6 1240.6,387.5 1241.9,408.0 1243.2,368.8 1244.5,376.5 1245.8,393.5 1247.1,405.6 1248.3,410.2 1249.6,367.0 1250.9,371.4 1252.2,358.8 1253.5,374.3 1254.8,374.0 1256.1,425.3 1257.3,370.0 1258.6,370.3 1259.9,416.6 1261.2,376.6 1262.5,370.0 1263.8,399.6 1265.1,423.3 1266.3,371.6 1267.6,397.3 1268.9,408.4 1270.2,442.9 1271.5,419.5 1272.8,407.6 1274.1,423.5 1275.3,409.4 1276.6,427.4 1277.9,381.1 1279.2,366.5 1280.5,363.9 1281.8,360.0 1283.1,418.2 1284.3,410.5 1285.6,394.0 1286.9,348.1 1288.2,382.6 1289.5,350.0 1290.8,411.9 1292.0,419.5 1293.3,419.3 1294.6,390.5 1295.9,401.7 1297.2,379.9 1298.5,351.5 1299.8,408.7 1301.0,373.4 1302.3,419.6 1303.6,387.7 1304.9,381.4 1306.2,398.3 1307.5,365.1 1308.8,418.6 1310.0,371.8 1311.3,361.1 1312.6,391.4 1313.9,362.2 1315.2,385.9 1316.5,395.1 1317.8,370.9 1319.0,400.6 1320.3,422.4 1321.6,421.8 1322.9,410.9 1324.2,399.6 1325.5,348.7 1326.8,412.5 1328.0,402.6 1329.3,402.8 1330.6,406.0 1331.9,417.5 1333.2,428.4 1334.5,371.6 1335.8,388.7 1337.0,334.5 1338.3,405.8 1339.6,380.5 1340.9,354.8 1342.2,380.2 1343.5,397.5 1344.8,357.1 1346.0,393.1 1347.3,393.8 1348.6,351.0 1349.9,377.4 1351.2,425.9 1352.5,386.5 1353.8,388.2 1355.0,366.1 1356.3,402.0 1357.6,404.6 1358.9,341.9 1360.2,424.2 1361.5,417.0 1362.8,432.0 1364.0,418.3 1365.3,400.8 1366.6,419.7 1367.9,339.5 1369.2,376.8 1370.5,400.5 1371.8,400.1 1373.0,382.2 1374.3,416.1 1375.6,404.0 1376.9,415.0 1378.2,391.2 1379.5,371.2 1380.7,385.7 1382.0,379.6 1383.3,375.3 1384.6,382.0 1385.9,358.5 1387.2,334.4 1388.5,334.8 1389.7,427.0 1391.0,344.3 1392.3,345.6 1393.6,344.7 1394.9,410.7 1396.2,422.0 1397.5,379.9 1398.7,441.5 1400.0,411.1 1401.3,332.5 1402.6,333.2 1403.9,388.8 1405.2,383.2 1406.5,374.0 1407.7,420.8 1409.0,356.1 1410.3,450.6 1411.6,375.3 1412.9,359.5 1414.2,407.6 1415.5,375.2 1416.7,380.1 1418.0,367.9 1419.3,360.6" fill="none" stroke="#de4a4a" stroke-width="2.7" stroke-linejoin="miter" stroke-miterlimit="12"/><polyline points="135.1,1120.5 136.4,1068.7 137.7,994.1 139.0,985.3 140.2,988.5 141.5,888.8 142.8,913.3 144.1,876.5 145.4,887.7 146.7,899.2 148.0,850.7 149.2,848.5 150.5,812.6 151.8,830.3 153.1,808.3 154.4,832.6 155.7,805.3 157.0,765.0 158.2,778.3 159.5,763.7 160.8,783.2 162.1,747.3 163.4,777.6 164.7,778.1 166.0,748.2 167.2,748.5 168.5,724.8 169.8,778.9 171.1,794.9 172.4,766.4 173.7,711.6 175.0,771.7 176.2,747.5 177.5,793.7 178.8,727.1 180.1,763.4 181.4,777.5 182.7,742.2 183.9,754.7 185.2,779.0 186.5,753.3 187.8,768.2 189.1,689.1 190.4,691.4 191.7,724.9 192.9,680.2 194.2,721.6 195.5,736.4 196.8,742.5 198.1,663.3 199.4,745.1 200.7,662.1 201.9,759.1 203.2,662.0 204.5,718.9 205.8,732.3 207.1,691.8 208.4,689.3 209.7,681.7 210.9,697.5 212.2,714.5 213.5,717.7 214.8,693.1 216.1,705.1 217.4,682.5 218.7,653.1 219.9,656.1 221.2,713.6 222.5,642.3 223.8,703.3 225.1,708.8 226.4,737.9 227.7,699.4 228.9,706.5 230.2,691.6 231.5,678.9 232.8,676.2 234.1,707.7 235.4,644.2 236.7,663.6 237.9,688.4 239.2,655.9 240.5,611.0 241.8,690.0 243.1,684.6 244.4,619.6 245.7,612.7 246.9,606.1 248.2,616.6 249.5,680.6 250.8,682.4 252.1,611.9 253.4,631.8 254.7,644.9 255.9,636.5 257.2,625.6 258.5,625.2 259.8,646.5 261.1,618.1 262.4,604.0 263.6,646.6 264.9,683.8 266.2,664.0 267.5,654.3 268.8,599.1 270.1,608.3 271.4,641.4 272.6,601.8 273.9,652.7 275.2,669.7 276.5,611.9 277.8,645.1 279.1,613.6 280.4,624.0 281.6,576.3 282.9,605.6 284.2,574.1 285.5,645.1 286.8,629.2 288.1,642.7 289.4,577.9 290.6,595.0 291.9,605.0 293.2,592.4 294.5,626.4 295.8,585.0 297.1,651.4 298.4,593.5 299.6,582.7 300.9,572.7 302.2,611.7 303.5,599.9 304.8,602.4 306.1,601.0 307.4,554.9 308.6,640.7 309.9,595.4 311.2,629.6 312.5,620.1 313.8,576.0 315.1,657.4 316.4,642.9 317.6,606.2 318.9,606.6 320.2,640.2 321.5,584.1 322.8,614.4 324.1,630.5 325.4,622.0 326.6,600.5 327.9,602.4 329.2,570.5 330.5,569.4 331.8,576.1 333.1,633.5 334.4,612.2 335.6,566.2 336.9,613.7 338.2,556.7 339.5,618.5 340.8,597.6 342.1,564.0 343.4,562.2 344.6,544.0 345.9,583.5 347.2,576.8 348.5,605.5 349.8,554.3 351.1,592.2 352.3,584.3 353.6,612.7 354.9,546.0 356.2,580.8 357.5,567.2 358.8,558.1 360.1,547.2 361.3,611.8 362.6,553.0 363.9,581.0 365.2,635.4 366.5,592.1 367.8,610.3 369.1,601.0 370.3,526.8 371.6,582.4 372.9,577.7 374.2,584.6 375.5,587.2 376.8,579.4 378.1,566.6 379.3,578.0 380.6,616.1 381.9,569.4 383.2,591.7 384.5,595.5 385.8,578.8 387.1,559.4 388.3,559.5 389.6,544.7 390.9,535.8 392.2,599.4 393.5,527.1 394.8,615.5 396.1,597.2 397.3,600.7 398.6,598.5 399.9,571.4 401.2,598.8 402.5,528.4 403.8,540.3 405.1,580.2 406.3,594.6 407.6,556.9 408.9,547.1 410.2,601.4 411.5,513.3 412.8,517.3 414.1,563.8 415.3,532.9 416.6,553.5 417.9,555.1 419.2,543.4 420.5,594.0 421.8,574.3 423.1,568.0 424.3,537.9 425.6,546.7 426.9,556.8 428.2,514.3 429.5,532.0 430.8,514.0 432.1,590.0 433.3,544.1 434.6,537.2 435.9,553.7 437.2,525.0 438.5,576.4 439.8,531.4 441.0,583.8 442.3,546.2 443.6,565.4 444.9,523.3 446.2,529.8 447.5,514.5 448.8,533.0 450.0,534.2 451.3,555.4 452.6,536.1 453.9,574.6 455.2,557.9 456.5,582.9 457.8,564.7 459.0,525.2 460.3,587.0 461.6,586.3 462.9,536.8 464.2,537.8 465.5,494.6 466.8,514.7 468.0,559.0 469.3,583.9 470.6,486.4 471.9,533.7 473.2,537.8 474.5,512.5 475.8,508.3 477.0,537.9 478.3,555.4 479.6,518.3 480.9,498.5 482.2,550.3 483.5,515.1 484.8,519.3 486.0,508.9 487.3,527.3 488.6,558.8 489.9,584.6 491.2,517.5 492.5,473.7 493.8,502.6 495.0,521.3 496.3,527.0 497.6,498.7 498.9,556.1 500.2,546.1 501.5,512.4 502.8,488.7 504.0,465.3 505.3,513.0 506.6,552.6 507.9,497.7 509.2,504.8 510.5,532.3 511.8,517.4 513.0,566.0 514.3,481.7 515.6,486.3 516.9,487.0 518.2,491.6 519.5,498.3 520.8,559.4 522.0,566.7 523.3,567.2 524.6,509.1 525.9,503.7 527.2,526.8 528.5,497.9 529.7,533.3 531.0,494.0 532.3,505.1 533.6,544.9 534.9,541.2 536.2,525.7 537.5,570.9 538.7,496.4 540.0,474.6 541.3,507.2 542.6,536.9 543.9,544.8 545.2,513.4 546.5,504.4 547.7,567.4 549.0,507.6 550.3,519.3 551.6,528.4 552.9,489.7 554.2,524.0 555.5,570.7 556.7,533.7 558.0,489.8 559.3,533.9 560.6,527.5 561.9,446.7 563.2,535.7 564.5,494.8 565.7,484.8 567.0,525.4 568.3,538.1 569.6,516.7 570.9,537.1 572.2,526.4 573.5,493.1 574.7,513.6 576.0,539.8 577.3,522.5 578.6,492.8 579.9,510.2 581.2,519.4 582.5,512.5 583.7,465.6 585.0,493.3 586.3,537.4 587.6,536.4 588.9,494.8 590.2,506.1 591.5,547.4 592.7,473.5 594.0,497.9 595.3,491.9 596.6,535.4 597.9,533.9 599.2,490.7 600.5,564.8 601.7,528.6 603.0,479.1 604.3,496.3 605.6,510.5 606.9,473.2 608.2,482.7 609.4,519.0 610.7,460.8 612.0,466.4 613.3,498.8 614.6,536.7 615.9,452.0 617.2,475.8 618.4,478.9 619.7,512.2 621.0,497.7 622.3,454.2 623.6,500.4 624.9,521.2 626.2,481.9 627.4,453.1 628.7,452.7 630.0,473.2 631.3,498.9 632.6,508.3 633.9,499.9 635.2,480.7 636.4,475.5 637.7,509.5 639.0,462.5 640.3,526.2 641.6,502.8 642.9,533.5 644.2,524.4 645.4,463.9 646.7,484.5 648.0,497.7 649.3,428.1 650.6,486.6 651.9,502.9 653.2,441.6 654.4,494.7 655.7,514.4 657.0,476.2 658.3,496.7 659.6,529.9 660.9,490.7 662.2,484.3 663.4,452.1 664.7,478.9 666.0,485.5 667.3,426.8 668.6,476.8 669.9,457.3 671.2,482.5 672.4,518.6 673.7,448.0 675.0,497.9 676.3,507.7 677.6,469.8 678.9,527.3 680.2,445.4 681.4,477.1 682.7,475.0 684.0,497.4 685.3,444.0 686.6,470.3 687.9,459.7 689.2,526.4 690.4,527.9 691.7,452.6 693.0,512.3 694.3,447.8 695.6,508.6 696.9,497.6 698.1,516.6 699.4,505.2 700.7,537.8 702.0,452.0 703.3,515.7 704.6,496.0 705.9,427.6 707.1,530.4 708.4,518.0 709.7,463.5 711.0,520.5 712.3,496.3 713.6,477.9 714.9,438.1 716.1,482.5 717.4,474.4 718.7,441.9 720.0,449.1 721.3,471.5 722.6,459.6 723.9,441.3 725.1,470.3 726.4,490.7 727.7,486.0 729.0,475.8 730.3,499.5 731.6,440.1 732.9,499.7 734.1,438.7 735.4,456.1 736.7,504.2 738.0,495.5 739.3,473.3 740.6,415.1 741.9,437.2 743.1,476.1 744.4,504.0 745.7,437.1 747.0,446.7 748.3,434.9 749.6,485.8 750.9,441.6 752.1,459.6 753.4,511.0 754.7,506.9 756.0,443.0 757.3,492.1 758.6,455.4 759.9,434.0 761.1,482.2 762.4,486.8 763.7,507.5 765.0,446.8 766.3,440.3 767.6,512.0 768.9,434.5 770.1,429.4 771.4,439.1 772.7,424.8 774.0,484.9 775.3,495.6 776.6,465.4 777.9,493.0 779.1,454.9 780.4,461.6 781.7,428.2 783.0,484.6 784.3,485.0 785.6,494.0 786.8,422.8 788.1,485.7 789.4,466.1 790.7,458.7 792.0,414.5 793.3,463.0 794.6,487.0 795.8,490.2 797.1,475.5 798.4,447.0 799.7,473.9 801.0,482.5 802.3,456.4 803.6,452.6 804.8,511.7 806.1,458.6 807.4,461.0 808.7,444.3 810.0,472.0 811.3,451.2 812.6,509.4 813.8,420.9 815.1,483.5 816.4,439.2 817.7,412.4 819.0,475.4 820.3,469.7 821.6,464.4 822.8,451.5 824.1,505.0 825.4,450.6 826.7,477.8 828.0,457.2 829.3,440.2 830.6,440.1 831.8,444.6 833.1,424.0 834.4,441.3 835.7,447.9 837.0,488.2 838.3,436.4 839.6,471.5 840.8,429.1 842.1,476.3 843.4,430.6 844.7,394.9 846.0,431.9 847.3,466.4 848.6,419.4 849.8,425.4 851.1,422.1 852.4,413.8 853.7,459.8 855.0,430.4 856.3,473.8 857.6,503.0 858.8,484.2 860.1,450.2 861.4,419.3 862.7,407.9 864.0,476.5 865.3,479.9 866.5,444.1 867.8,480.6 869.1,436.3 870.4,397.7 871.7,480.5 873.0,448.7 874.3,443.7 875.5,437.4 876.8,457.1 878.1,453.4 879.4,396.5 880.7,447.6 882.0,468.7 883.3,408.7 884.5,500.7 885.8,452.3 887.1,438.6 888.4,431.5 889.7,425.7 891.0,490.5 892.3,503.4 893.5,468.8 894.8,478.1 896.1,435.4 897.4,414.0 898.7,460.4 900.0,456.1 901.3,411.0 902.5,465.4 903.8,424.8 905.1,435.8 906.4,420.7 907.7,489.7 909.0,444.8 910.3,444.1 911.5,451.0 912.8,451.5 914.1,476.7 915.4,439.6 916.7,423.3 918.0,410.4 919.3,438.1 920.5,406.4 921.8,454.8 923.1,418.2 924.4,487.3 925.7,403.6 927.0,406.6 928.3,459.5 929.5,465.4 930.8,433.8 932.1,406.4 933.4,494.3 934.7,450.9 936.0,442.4 937.3,442.4 938.5,464.2 939.8,440.3 941.1,406.2 942.4,395.7 943.7,442.6 945.0,477.9 946.3,419.3 947.5,412.1 948.8,479.6 950.1,442.0 951.4,427.2 952.7,438.6 954.0,428.0 955.2,440.9 956.5,391.4 957.8,438.5 959.1,401.2 960.4,470.9 961.7,449.9 963.0,396.9 964.2,440.8 965.5,456.3 966.8,462.9 968.1,459.6 969.4,425.9 970.7,401.6 972.0,449.8 973.2,443.5 974.5,406.5 975.8,421.8 977.1,486.9 978.4,447.7 979.7,398.3 981.0,420.1 982.2,374.2 983.5,485.6 984.8,447.9 986.1,484.9 987.4,442.7 988.7,454.3 990.0,403.3 991.2,444.2 992.5,405.8 993.8,471.0 995.1,448.7 996.4,417.1 997.7,443.3 999.0,415.8 1000.2,430.2 1001.5,447.4 1002.8,462.0 1004.1,482.4 1005.4,407.1 1006.7,468.1 1008.0,450.7 1009.2,445.8 1010.5,464.8 1011.8,460.7 1013.1,413.8 1014.4,461.6 1015.7,458.8 1017.0,421.3 1018.2,396.6 1019.5,445.6 1020.8,465.6 1022.1,431.6 1023.4,425.8 1024.7,455.4 1026.0,452.4 1027.2,449.8 1028.5,447.3 1029.8,397.4 1031.1,406.6 1032.4,458.7 1033.7,404.1 1035.0,422.9 1036.2,453.8 1037.5,448.9 1038.8,453.9 1040.1,392.1 1041.4,434.8 1042.7,423.2 1043.9,474.4 1045.2,447.5 1046.5,451.8 1047.8,461.1 1049.1,419.2 1050.4,455.2 1051.7,409.1 1052.9,433.1 1054.2,459.1 1055.5,432.5 1056.8,447.3 1058.1,453.0 1059.4,451.9 1060.7,454.7 1061.9,463.2 1063.2,406.4 1064.5,417.0 1065.8,427.8 1067.1,461.1 1068.4,424.8 1069.7,453.6 1070.9,477.3 1072.2,440.9 1073.5,384.5 1074.8,419.4 1076.1,420.5 1077.4,450.3 1078.7,392.1 1079.9,395.8 1081.2,451.4 1082.5,458.9 1083.8,429.1 1085.1,439.5 1086.4,436.2 1087.7,466.5 1088.9,454.3 1090.2,400.1 1091.5,430.1 1092.8,454.3 1094.1,442.0 1095.4,420.5 1096.7,408.2 1097.9,454.1 1099.2,440.8 1100.5,417.4 1101.8,451.0 1103.1,396.0 1104.4,406.6 1105.7,426.4 1106.9,453.4 1108.2,402.1 1109.5,448.6 1110.8,438.6 1112.1,408.1 1113.4,462.9 1114.7,435.3 1115.9,394.0 1117.2,413.9 1118.5,453.4 1119.8,401.3 1121.1,395.2 1122.4,422.2 1123.6,429.0 1124.9,400.2 1126.2,464.7 1127.5,407.0 1128.8,432.9 1130.1,462.9 1131.4,392.3 1132.6,426.3 1133.9,400.5 1135.2,416.8 1136.5,452.2 1137.8,392.6 1139.1,404.0 1140.4,456.7 1141.6,441.0 1142.9,421.2 1144.2,449.8 1145.5,379.8 1146.8,383.2 1148.1,454.1 1149.4,381.2 1150.6,399.7 1151.9,409.3 1153.2,419.6 1154.5,408.4 1155.8,373.8 1157.1,428.8 1158.4,429.2 1159.6,461.1 1160.9,405.1 1162.2,389.9 1163.5,434.8 1164.8,465.0 1166.1,390.3 1167.4,380.8 1168.6,407.9 1169.9,418.3 1171.2,429.1 1172.5,440.6 1173.8,426.3 1175.1,449.2 1176.4,413.6 1177.6,422.1 1178.9,395.5 1180.2,382.7 1181.5,464.0 1182.8,371.9 1184.1,437.8 1185.4,392.5 1186.6,452.9 1187.9,372.3 1189.2,416.3 1190.5,413.3 1191.8,388.2 1193.1,444.4 1194.4,389.2 1195.6,439.4 1196.9,457.6 1198.2,398.9 1199.5,391.8 1200.8,470.7 1202.1,448.5 1203.4,422.9 1204.6,435.1 1205.9,415.4 1207.2,402.5 1208.5,400.8 1209.8,375.9 1211.1,471.4 1212.3,433.7 1213.6,419.5 1214.9,434.7 1216.2,425.8 1217.5,394.5 1218.8,392.3 1220.1,399.9 1221.3,396.6 1222.6,420.9 1223.9,423.0 1225.2,439.8 1226.5,369.6 1227.8,399.3 1229.1,392.9 1230.3,415.8 1231.6,389.9 1232.9,434.8 1234.2,450.9 1235.5,460.6 1236.8,400.7 1238.1,446.1 1239.3,435.6 1240.6,373.2 1241.9,415.5 1243.2,390.1 1244.5,451.5 1245.8,431.4 1247.1,375.9 1248.3,359.6 1249.6,406.1 1250.9,437.0 1252.2,439.2 1253.5,411.0 1254.8,440.6 1256.1,398.5 1257.3,372.1 1258.6,449.9 1259.9,353.4 1261.2,402.5 1262.5,405.3 1263.8,431.2 1265.1,408.7 1266.3,408.7 1267.6,433.9 1268.9,392.4 1270.2,392.1 1271.5,373.5 1272.8,402.1 1274.1,422.2 1275.3,429.1 1276.6,397.5 1277.9,393.6 1279.2,388.4 1280.5,427.6 1281.8,385.9 1283.1,446.6 1284.3,420.8 1285.6,384.2 1286.9,383.1 1288.2,435.2 1289.5,427.5 1290.8,426.1 1292.0,398.8 1293.3,396.9 1294.6,453.2 1295.9,411.1 1297.2,390.8 1298.5,410.5 1299.8,351.8 1301.0,402.2 1302.3,393.7 1303.6,455.7 1304.9,381.0 1306.2,444.6 1307.5,414.3 1308.8,403.0 1310.0,407.2 1311.3,401.2 1312.6,423.0 1313.9,443.3 1315.2,403.9 1316.5,387.5 1317.8,410.4 1319.0,406.8 1320.3,439.2 1321.6,402.8 1322.9,404.4 1324.2,418.0 1325.5,401.7 1326.8,376.3 1328.0,438.3 1329.3,397.0 1330.6,405.4 1331.9,380.2 1333.2,394.2 1334.5,430.2 1335.8,407.1 1337.0,452.8 1338.3,420.9 1339.6,391.5 1340.9,407.6 1342.2,384.7 1343.5,456.3 1344.8,433.6 1346.0,400.5 1347.3,365.7 1348.6,396.4 1349.9,380.2 1351.2,422.5 1352.5,454.7 1353.8,403.5 1355.0,395.9 1356.3,353.7 1357.6,376.1 1358.9,352.9 1360.2,386.4 1361.5,375.6 1362.8,396.8 1364.0,368.2 1365.3,352.1 1366.6,399.2 1367.9,366.9 1369.2,406.4 1370.5,428.8 1371.8,429.3 1373.0,395.6 1374.3,394.7 1375.6,369.2 1376.9,370.4 1378.2,385.0 1379.5,419.4 1380.7,418.8 1382.0,376.2 1383.3,406.2 1384.6,384.0 1385.9,395.2 1387.2,400.7 1388.5,361.2 1389.7,402.3 1391.0,404.1 1392.3,385.6 1393.6,393.7 1394.9,414.1 1396.2,354.7 1397.5,384.6 1398.7,402.0 1400.0,373.4 1401.3,428.2 1402.6,427.7 1403.9,426.7 1405.2,427.5 1406.5,430.3 1407.7,376.4 1409.0,406.2 1410.3,422.0 1411.6,430.4 1412.9,348.1 1414.2,402.1 1415.5,392.7 1416.7,413.9 1418.0,409.9 1419.3,408.6" fill="none" stroke="#4f86dc" stroke-width="2.7" stroke-linejoin="miter" stroke-miterlimit="12"/></g><circle cx="1420" cy="370.5" r="4" fill="#4f86dc"/><circle cx="1420" cy="404.5" r="4" fill="#de4a4a"/><circle cx="1420" cy="424" r="4" fill="#7f55bd"/><rect x="300.7" y="291.3" width="17.2" height="3.2" rx="1.2" fill="#7f55bd"/><rect x="496.7" y="291.3" width="17.2" height="3.2" rx="1.2" fill="#3e955a"/><rect x="754.7" y="291.3" width="17.2" height="3.2" rx="1.2" fill="#de4a4a"/><rect x="969.5" y="291.3" width="17.2" height="3.2" rx="1.2" fill="#4f86dc"/><rect x="1429.5" y="282" width="14.5" height="21" fill="#fafafa" stroke="#eeeeee" stroke-width="1"/></svg>
<div class="t" style="left:718.18px;top:243.06px;font-size:26.16px;line-height:26.16px;color:#2b3036;font-weight:bold;transform:scaleX(0.9406);">val_acc</div>
<div class="t" style="left:328.59px;top:282.60px;font-size:20.35px;line-height:20.35px;color:#7f55bd;transform:scaleX(0.9956);">dastardly-duck-4</div>
<div class="t" style="left:524.57px;top:282.60px;font-size:20.35px;line-height:20.35px;color:#3e955a;transform:scaleX(1.0137);">clairvoyant-chipmunk-3</div>
<div class="t" style="left:782.44px;top:282.60px;font-size:20.35px;line-height:20.35px;color:#de4a4a;transform:scaleX(1.0271);">bountiful-badger-2</div>
<div class="t" style="left:997.19px;top:282.60px;font-size:20.35px;line-height:20.35px;color:#4f86dc;transform:scaleX(0.9987);">adventurous-aardvark-1</div>
<div class="t" style="left:79.82px;top:314.73px;font-size:23.26px;line-height:23.26px;color:#5b606b;transform:scaleX(0.9453);">3.5</div>
<div class="t" style="left:98.18px;top:444.98px;font-size:23.26px;line-height:23.26px;color:#5b606b;transform:scaleX(0.9453);">3</div>
<div class="t" style="left:79.82px;top:575.23px;font-size:23.26px;line-height:23.26px;color:#5b606b;transform:scaleX(0.9453);">2.5</div>
<div class="t" style="left:98.40px;top:705.48px;font-size:23.26px;line-height:23.26px;color:#5b606b;transform:scaleX(0.9453);">2</div>
<div class="t" style="left:79.82px;top:835.73px;font-size:23.26px;line-height:23.26px;color:#5b606b;transform:scaleX(0.9453);">1.5</div>
<div class="t" style="left:98.29px;top:965.98px;font-size:23.26px;line-height:23.26px;color:#5b606b;transform:scaleX(0.9453);">1</div>
<div class="t" style="left:79.82px;top:1096.23px;font-size:23.26px;line-height:23.26px;color:#5b606b;transform:scaleX(0.9453);">0.5</div>
<div class="t" style="left:129.09px;top:1147.65px;font-size:22.53px;line-height:22.53px;color:#5b606b;transform:scaleX(0.9525);">0</div>
<div class="t" style="left:374.18px;top:1147.65px;font-size:22.53px;line-height:22.53px;color:#5b606b;transform:scaleX(0.9525);">200</div>
<div class="t" style="left:631.60px;top:1147.65px;font-size:22.53px;line-height:22.53px;color:#5b606b;transform:scaleX(0.9525);">400</div>
<div class="t" style="left:888.38px;top:1147.65px;font-size:22.53px;line-height:22.53px;color:#5b606b;transform:scaleX(0.9525);">600</div>
<div class="t" style="left:1145.53px;top:1147.65px;font-size:22.53px;line-height:22.53px;color:#5b606b;transform:scaleX(0.9525);">800</div>
<div class="t" style="left:1361.55px;top:1095.01px;font-size:23.98px;line-height:23.98px;color:#6b7079;transform:scaleX(0.9694);">Step</div>
<div class="r" style="left:1500px;top:194px;width:1px;height:1021px;background:#dcdcdc;border-radius:0px;"></div>
<div class="r" style="left:1501px;top:292px;width:906px;height:3px;background:#dedede;border-radius:0px;"></div>
<div class="r" style="left:1500px;top:292px;width:121px;height:3px;background:#111111;border-radius:0px;"></div>
<div class="t" style="left:1532.02px;top:241.20px;font-size:27.18px;line-height:27.18px;color:#111111;font-weight:bold;transform:scaleX(0.9503);">Data</div>
<div class="t" style="left:1652.84px;top:241.10px;font-size:27.18px;line-height:27.18px;color:#30353b;transform:scaleX(1.0007);">Grouping</div>
<div class="t" style="left:1826.27px;top:241.10px;font-size:27.18px;line-height:27.18px;color:#30353b;transform:scaleX(0.9775);">Chart</div>
<div class="t" style="left:1954.32px;top:241.10px;font-size:27.18px;line-height:27.18px;color:#30353b;transform:scaleX(0.9584);">Legend</div>
<div class="t" style="left:2104.05px;top:241.10px;font-size:27.18px;line-height:27.18px;color:#30353b;transform:scaleX(0.9436);">Expressions</div>
<div class="r" style="left:2407px;top:194px;width:15px;height:1021px;background:#f7f7f7;border-radius:0px;border-left:1px solid #ececec;box-sizing:border-box;"></div>
<div class="r" style="left:2411px;top:197px;width:8px;height:877px;background:#c1c1c1;border-radius:4px;"></div>
<div class="t" style="left:1535.81px;top:363.73px;font-size:22.67px;line-height:22.67px;color:#3a3f47;font-weight:bold;transform:scaleX(0.8479);">X</div>
<div class="r" style="left:1718px;top:337px;width:647px;height:78px;background:#fff;border:1.5px solid #dadada;box-sizing:border-box;border-radius:7px;"></div>
<div class="t" style="left:1744.83px;top:359.77px;font-size:27.33px;line-height:27.33px;color:#2b2f36;transform:scaleX(0.9548);">Step</div>
<div class="t" style="left:1535.62px;top:470.33px;font-size:22.67px;line-height:22.67px;color:#3a3f47;font-weight:bold;transform:scaleX(0.8330);">Y</div>
<div class="r" style="left:1718px;top:443.5px;width:647px;height:78.0px;background:#fff;border:1.5px solid #dadada;box-sizing:border-box;border-radius:7px;"></div>
<div class="r" style="left:2292px;top:445px;width:71.5px;height:75px;background:#f4f4f4;border-radius:0px;border-left:1.5px solid #dadada;border-radius:0 6px 6px 0;box-sizing:border-box;"></div>
<div class="r" style="left:1736px;top:458.3px;width:151px;height:48.39999999999998px;background:#d6ecfa;border-radius:6px;"></div>
<div class="t" style="left:1753.89px;top:468.85px;font-size:22.53px;line-height:22.53px;color:#2b2f36;transform:scaleX(1.0093);">val_acc</div>
<div class="t" style="left:1535.60px;top:573.04px;font-size:23.84px;line-height:23.84px;color:#3a3f47;font-weight:bold;transform:scaleX(0.8574);">X Axis</div>
<div class="r" style="left:1718.4px;top:550.6px;width:167.19999999999982px;height:69.0px;background:#fff;border:1.5px solid #dadada;box-sizing:border-box;border-radius:7px;"></div>
<div class="t" style="left:1742.51px;top:573.90px;font-size:24.71px;line-height:24.71px;color:#acafb3;transform:scaleX(1.1758);">min</div>
<div class="r" style="left:1903.6px;top:550.6px;width:167.0999999999999px;height:69.0px;background:#fff;border:1.5px solid #dadada;box-sizing:border-box;border-radius:7px;"></div>
<div class="t" style="left:1928.18px;top:573.90px;font-size:24.71px;line-height:24.71px;color:#acafb3;transform:scaleX(1.0725);">max</div>
<div class="r" style="left:2089.4px;top:550.6px;width:72.19999999999982px;height:69.0px;background:#f3f3f3;border:1.5px solid #dadada;box-sizing:border-box;border-radius:7px;"></div>
<div class="t" style="left:1535.39px;top:671.14px;font-size:23.84px;line-height:23.84px;color:#3a3f47;font-weight:bold;transform:scaleX(0.8561);">Y Axis</div>
<div class="r" style="left:1718.4px;top:648.7px;width:167.19999999999982px;height:68.69999999999993px;background:#fff;border:1.5px solid #dadada;box-sizing:border-box;border-radius:7px;"></div>
<div class="t" style="left:1742.51px;top:672.00px;font-size:24.71px;line-height:24.71px;color:#acafb3;transform:scaleX(1.1758);">min</div>
<div class="r" style="left:1903.6px;top:648.7px;width:167.0999999999999px;height:68.69999999999993px;background:#fff;border:1.5px solid #dadada;box-sizing:border-box;border-radius:7px;"></div>
<div class="t" style="left:1928.18px;top:672.00px;font-size:24.71px;line-height:24.71px;color:#acafb3;transform:scaleX(1.0725);">max</div>
<div class="r" style="left:2089.4px;top:648.7px;width:72.19999999999982px;height:68.69999999999993px;background:#f3f3f3;border:1.5px solid #dadada;box-sizing:border-box;border-radius:7px;"></div>
<div class="r" style="left:2180.6px;top:648.7px;width:72.20000000000027px;height:68.69999999999993px;background:#f3f3f3;border:1.5px solid #dadada;box-sizing:border-box;border-radius:7px;"></div>
<div class="t" style="left:1534.96px;top:761.91px;font-size:23.98px;line-height:23.98px;color:#1f252c;font-weight:bold;transform:scaleX(0.9215);">Max runs to show*</div>
<div class="r" style="left:2182.2px;top:745.1px;width:99.5px;height:57.5px;background:#fff;border:1.5px solid #d9dde3;box-sizing:border-box;border-radius:7px;"></div>
<div class="t" style="left:2218.08px;top:761.98px;font-size:25.44px;line-height:25.44px;color:#d1d5da;transform:scaleX(0.9553);">10</div>
<div class="t" style="left:1535.33px;top:839.36px;font-size:23.11px;line-height:23.11px;color:#1f252c;font-weight:bold;transform:scaleX(0.9780);">Point aggregation method</div>
<div class="t" style="left:1535.74px;top:877.51px;font-size:23.98px;line-height:23.98px;color:#7a818b;transform:scaleX(0.9780);">Only applies to lines with more than 1,000 data points.</div>
<div class="t" style="left:1574.83px;top:920.39px;font-size:26.60px;line-height:26.60px;color:#1f252c;transform:scaleX(1.0174);">Random sampling</div>
<div class="t" style="left:1574.77px;top:959.29px;font-size:26.60px;line-height:26.60px;color:#1f252c;transform:scaleX(1.0498);">Full fidelity</div>
<div class="r" style="left:1553.3px;top:1010px;width:2.7000000000000455px;height:56px;background:#c3c8d0;border-radius:0px;"></div>
<div class="t" style="left:1580.77px;top:1025.00px;font-size:24.71px;line-height:24.71px;color:#7a818b;transform:scaleX(0.9222);">Show min/max values as a shaded area</div>
<div class="r" style="left:2000.5px;top:1010.8px;width:208.80000000000018px;height:54.600000000000136px;background:#fff;border:1.5px solid #d5d9df;box-sizing:border-box;border-radius:7px;"></div>
<div class="t" style="left:2024.11px;top:1025.54px;font-size:26.89px;line-height:26.89px;color:#1f252c;transform:scaleX(0.9695);">Never</div>
<div class="t" style="left:1535.72px;top:1092.18px;font-size:25.44px;line-height:25.44px;color:#1f252c;font-weight:bold;transform:scaleX(0.8921);">Smoothing</div>
<div class="r" style="left:1732.9px;top:1087.8px;width:638.5999999999999px;height:54.200000000000045px;background:#fff;border:1.5px solid #d5d9df;box-sizing:border-box;border-radius:7px;"></div>
<div class="t" style="left:1756.88px;top:1101.53px;font-size:27.62px;line-height:27.62px;color:#1f252c;transform:scaleX(0.9372);">Time weighted EMA</div>
<svg class="s" style="left:1500px;top:194px;overflow:hidden;" width="907" height="1021" viewBox="1500 194 907 1021"><path d="M2325.5 368.0 l5.0 5.0 5.0 -5.0" fill="none" stroke="#5d6168" stroke-width="1.6" stroke-linecap="round" stroke-linejoin="round"/><path d="M2252.5 474.3 l5.0 5.0 5.0 -5.0" fill="none" stroke="#5d6168" stroke-width="1.6" stroke-linecap="round" stroke-linejoin="round"/><g stroke="#3b4048" stroke-width="1.6" stroke-linecap="round"><path d="M1846.5 474l11.5 11.5M1858 474l-11.5 11.5"/></g><circle cx="2320.6" cy="489.6" r="2.3" fill="#2b2f36"/><g stroke="#2b2f36" stroke-width="1.7" stroke-linecap="round"><path d="M2332 471.5v12M2326.8 474.5l10.4 6M2326.8 480.5l10.4 -6"/></g><rect x="2114" y="575.8" width="23" height="1.5" fill="#4d5157"/><rect x="2114" y="580.0" width="23" height="1.5" fill="#4d5157"/><rect x="2114" y="583.7" width="23" height="2.6" fill="#4d5157"/><rect x="2114" y="588.0" width="23" height="2.6" fill="#4d5157"/><rect x="2114" y="673.4" width="23" height="1.5" fill="#4d5157"/><rect x="2114" y="677.6" width="23" height="1.5" fill="#4d5157"/><rect x="2114" y="681.3" width="23" height="2.6" fill="#4d5157"/><rect x="2114" y="685.6" width="23" height="2.6" fill="#4d5157"/><g stroke="#3b4048" stroke-width="1.3" stroke-linecap="round"><path d="M2217.5 672.3l5 5M2222.5 672.3l-5 5"/></g><circle cx="2206" cy="692.4" r="1.6" fill="#3b4048"/><circle cx="2211.3" cy="687.3" r="1.6" fill="#3b4048"/><circle cx="2216" cy="692.4" r="1.6" fill="#3b4048"/><circle cx="2226.5" cy="687.3" r="1.6" fill="#3b4048"/><rect x="1772.9" y="770.6" width="374.5" height="5.8" rx="2.9" fill="#c2c6d0"/><circle cx="1853.9" cy="773.7" r="18.8" fill="#fff" stroke="#c4c8d1" stroke-width="1.5"/><g fill="none" stroke="#1f252c" stroke-width="2.6" stroke-linecap="round" stroke-linejoin="round"><path d="M2324.3 771.8 A12.2 12.2 0 1 0 2327.5 764.5"/><path d="M2326 759.5 l0 7.5 7.5 0"/></g><circle cx="1843.1" cy="851.2" r="10.3" fill="none" stroke="#6b7079" stroke-width="1.6"/><rect x="1842.2" y="848.5" width="1.9" height="7.5" fill="#6b7079"/><circle cx="1843.1" cy="845.3" r="1.2" fill="#6b7079"/><circle cx="1549" cy="933.4" r="12.3" fill="#fff" stroke="#70757d" stroke-width="1.5"/><circle cx="1549" cy="972.9" r="12.3" fill="#fff" stroke="#1f252c" stroke-width="1.6"/><circle cx="1549" cy="972.9" r="8.2" fill="#17a5b8"/><path d="M2173.1 1033.9 l8.0 8.0 8.0 -8.0" fill="none" stroke="#3b4048" stroke-width="1.8" stroke-linecap="round" stroke-linejoin="round"/><path d="M2335.3 1111.6 l8.0 8.0 8.0 -8.0" fill="none" stroke="#3b4048" stroke-width="1.8" stroke-linecap="round" stroke-linejoin="round"/><rect x="1760" y="1187.8" width="499.5" height="6.5" rx="3.2" fill="#c2c6d0"/><circle cx="1751" cy="1191.5" r="18.8" fill="#fff" stroke="#c4c8d1" stroke-width="1.5"/></svg>
<div class="r" style="left:2273.2px;top:1163.3px;width:99.3px;height:52px;border:1.5px solid #d9dde3;border-bottom:none;border-radius:7px 7px 0 0;box-sizing:border-box;background:#fff"></div>
<div class="t" style="left:2316.40px;top:1180.36px;font-size:23.69px;line-height:23.69px;color:#1f252c;transform:scaleX(0.9497);">0</div>
</body></html>
